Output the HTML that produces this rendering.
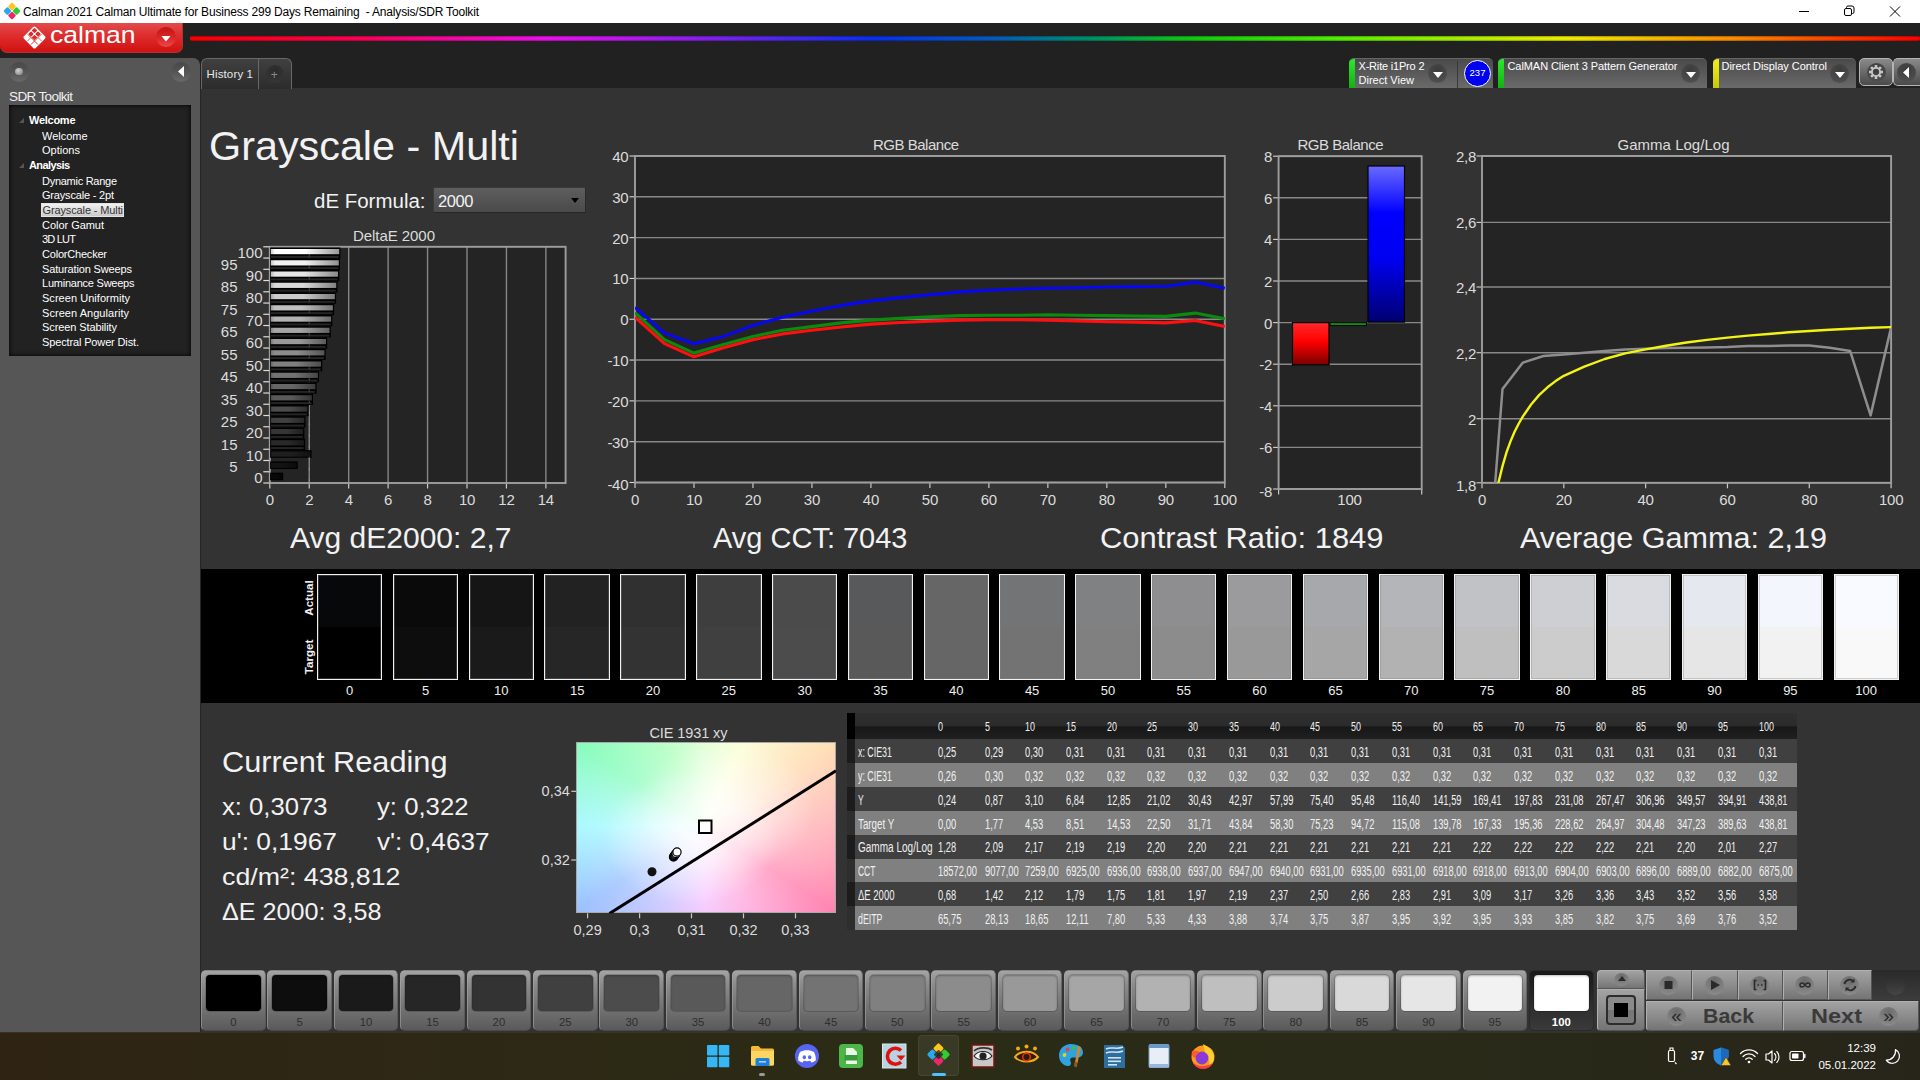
<!DOCTYPE html><html lang="en"><head><meta charset="utf-8"><title>Calman 2021 - Analysis/SDR Toolkit</title><style>
*{margin:0;padding:0;box-sizing:border-box}
html,body{width:1920px;height:1080px;overflow:hidden}
body{background:#333;font-family:"Liberation Sans",sans-serif;position:relative}
.a{position:absolute}
.t{position:absolute;white-space:nowrap;line-height:1}
svg{position:absolute;overflow:visible}
</style></head><body>
<div class="a " style="left:0px;top:0px;width:1920px;height:23px;background:#fff"></div>
<svg style="left:3px;top:2px" width="18" height="18" viewBox="0 0 18 18"><g transform="translate(9 9) rotate(45)"><rect x="-6.2" y="-6.2" width="6" height="6" rx="1.2" fill="#ffc61a"/><rect x="0.2" y="-6.2" width="6" height="6" rx="1.2" fill="#35c935"/><rect x="-6.2" y="0.2" width="6" height="6" rx="1.2" fill="#29a9e8"/><rect x="0.2" y="0.2" width="6" height="6" rx="1.2" fill="#e8286a"/></g></svg>
<div class="t" style="top:6.24px;font-size:12px;color:#000;letter-spacing:-0.187px;left:23.00px;white-space:pre;">Calman 2021 Calman Ultimate for Business 299 Days Remaining  - Analysis/SDR Toolkit</div>
<svg style="left:1790px;top:0" width="130" height="23" viewBox="0 0 130 23" fill="none" stroke="#000" stroke-width="1"><path d="M9 11.5h10"/><rect x="54.5" y="8.5" width="7" height="7" rx="1.5"/><path d="M56.5 8.5v-1a1.5 1.5 0 0 1 1.5-1.5h4a2 2 0 0 1 2 2v4a1.5 1.5 0 0 1-1.500 1.500h-1"/><path d="M100 6.5l10 10M110 6.500l-10 10"/></svg>
<div class="a " style="left:0px;top:23px;width:1920px;height:65px;background:#212121"></div>
<div class="a " style="left:190px;top:35.5px;width:1730px;height:5px;background:linear-gradient(90deg,#ff0000 0,#ff0058 10%,#f010f0 20.500%,#8420f0 30%,#0830f0 39.500%,#0460b4 47%,#00906c 52%,#10cc10 58%,#50f000 66%,#f0f000 79.500%,#ff9000 89%,#ff0000 100%);border-radius:2px"></div>
<div class="a " style="left:190px;top:35.5px;width:1730px;height:5px;background:linear-gradient(180deg,rgba(0,0,0,.35),rgba(0,0,0,0) 35%,rgba(0,0,0,0) 65%,rgba(0,0,0,.35));border-radius:2px"></div>
<div class="a " style="left:0px;top:23px;width:183px;height:30px;background:linear-gradient(180deg,#e24c4c 0,#de2c2c 45%,#d01212 100%);border-radius:0 0 7px 7px;border:1px solid #b83030;border-top:none;border-left:none"></div>
<svg style="left:22px;top:25px" width="25" height="25" viewBox="-12.5 -12.5 25 25"><g transform="rotate(45)"><rect x="-8.300" y="-8.300" width="16.600" height="16.600" rx="1.800" fill="#fff"/><g fill="#dc2a2a"><rect x="-6.900" y="-6.900" width="3.900" height="3.900" rx=".6"/><rect x="-1.950" y="-6.900" width="3.900" height="3.900" rx=".6"/><rect x="-6.900" y="-1.950" width="3.900" height="3.900" rx=".6"/><rect x="-1.950" y="-1.950" width="3.900" height="3.900" rx=".6"/></g><path d="M2.500 -7v14.500M-7 2.500h14.500" stroke="#dc2a2a" stroke-width=".9" fill="none"/><path d="M-2.500 2.500v5M2.500 -2.500h5" stroke="#dc2a2a" stroke-width=".7" fill="none"/></g></svg>
<div class="t" style="top:22.56px;font-size:24.5px;color:#fff;left:49.50px;transform:scaleX(1.08256);transform-origin:0 0;">calman</div>
<div class="a " style="left:155.8px;top:27px;width:19.8px;height:19.8px;border-radius:50%;background:linear-gradient(180deg,#c41414,#d82424 50%,#ec4a4a 100%)"></div>
<svg style="left:160.800px;top:35.800px" width="10" height="5.500" viewBox="0 0 10 6"><path d="M0 0h10l-5 6z" fill="#fff"/></svg>
<div class="a " style="left:0px;top:58px;width:199.5px;height:973.8px;background:#565656;border-radius:0 7px 0 0"></div>
<div class="a " style="left:199.5px;top:88px;width:1.5px;height:944px;background:#262626"></div>
<div class="a " style="left:9px;top:62px;width:20px;height:20px;border-radius:50%;background:linear-gradient(180deg,#484848,#555 50%,#6a6a6a)"></div>
<div class="a " style="left:15.3px;top:67.8px;width:7.4px;height:7.4px;border-radius:50%;background:radial-gradient(circle at 40% 35%,#d0d0d0,#858585 85%)"></div>
<div class="a " style="left:171px;top:62px;width:20px;height:20px;border-radius:50%;background:linear-gradient(180deg,#484848,#555 50%,#6a6a6a)"></div>
<svg style="left:178px;top:66px" width="6" height="11" viewBox="0 0 6 11"><path d="M6 0v11l-6-5.500z" fill="#fff"/></svg>
<div class="t" style="top:89.57px;font-size:13.5px;color:#f0f0f0;letter-spacing:-0.628px;left:9.00px;">SDR Toolkit</div>
<div class="a " style="left:9.3px;top:105px;width:181.3px;height:250.5px;background:#222;box-shadow:inset 0 0 5px #000"></div>
<svg style="left:18.500px;top:117.5px" width="5" height="5" viewBox="0 0 5 5"><path d="M5 0v5h-5z" fill="#555"/></svg>
<div class="t" style="top:114.69px;font-size:11px;color:#fff;font-weight:bold;letter-spacing:-0.265px;left:29.00px;">Welcome</div>
<div class="t" style="top:130.69px;font-size:11px;color:#fff;letter-spacing:-0.024px;left:42.00px;">Welcome</div>
<div class="t" style="top:144.69px;font-size:11px;color:#fff;letter-spacing:0.015px;left:42.00px;">Options</div>
<svg style="left:18.500px;top:162.5px" width="5" height="5" viewBox="0 0 5 5"><path d="M5 0v5h-5z" fill="#555"/></svg>
<div class="t" style="top:159.69px;font-size:11px;color:#fff;font-weight:bold;letter-spacing:-0.607px;left:29.00px;">Analysis</div>
<div class="t" style="top:175.69px;font-size:11px;color:#fff;letter-spacing:-0.271px;left:42.00px;">Dynamic Range</div>
<div class="t" style="top:189.69px;font-size:11px;color:#fff;letter-spacing:-0.185px;left:42.00px;">Grayscale - 2pt</div>
<div class="a " style="left:41px;top:203px;width:83px;height:14px;background:linear-gradient(180deg,#f2f2f2,#cacaca);border:1px solid #e4e4e4"></div>
<div class="t" style="top:204.69px;font-size:11px;color:#333;letter-spacing:-0.126px;left:42.50px;">Grayscale - Multi</div>
<div class="t" style="top:219.69px;font-size:11px;color:#fff;letter-spacing:-0.035px;left:42.00px;">Color Gamut</div>
<div class="t" style="top:234.19px;font-size:11px;color:#fff;letter-spacing:-0.780px;left:42.00px;">3D LUT</div>
<div class="t" style="top:248.69px;font-size:11px;color:#fff;letter-spacing:-0.204px;left:42.00px;">ColorChecker</div>
<div class="t" style="top:263.69px;font-size:11px;color:#fff;letter-spacing:-0.146px;left:42.00px;">Saturation Sweeps</div>
<div class="t" style="top:278.19px;font-size:11px;color:#fff;letter-spacing:-0.234px;left:42.00px;">Luminance Sweeps</div>
<div class="t" style="top:292.69px;font-size:11px;color:#fff;letter-spacing:0.037px;left:42.00px;">Screen Uniformity</div>
<div class="t" style="top:307.69px;font-size:11px;color:#fff;letter-spacing:0.049px;left:42.00px;">Screen Angularity</div>
<div class="t" style="top:322.19px;font-size:11px;color:#fff;letter-spacing:-0.095px;left:42.00px;">Screen Stability</div>
<div class="t" style="top:336.69px;font-size:11px;color:#fff;letter-spacing:-0.139px;left:42.00px;">Spectral Power Dist.</div>
<div class="a " style="left:201px;top:58px;width:91px;height:30.5px;background:linear-gradient(180deg,#404040,#2c2c2c);border:1px solid #686868;border-bottom:none;border-radius:6px 6px 0 0"></div>
<div class="a " style="left:258px;top:59px;width:1px;height:29.5px;background:#686868"></div>
<div class="t" style="top:68.77px;font-size:11.5px;color:#e8e8e8;letter-spacing:0.141px;left:206.50px;">History 1</div>
<div class="a " style="left:265.5px;top:64.5px;width:18px;height:18px;border-radius:50%;background:radial-gradient(circle at 50% 30%,#2a2a2a,#353535 75%,#3c3c3c)"></div>
<div class="t" style="top:68.84px;font-size:12px;color:#8a8a8a;left:274.30px;transform:translateX(-50%);transform-origin:50% 0;">+</div>
<div class="a " style="left:1349px;top:58px;width:143.5px;height:30px;background:linear-gradient(180deg,#4a4a4a 0,#6a6a6a 100%);border-radius:5px 5px 0 0;overflow:hidden;border-top:1px solid #666"><div class="a" style="left:0;top:-1px;width:6px;height:31px;background:linear-gradient(180deg,#30e830,#10b010)"></div></div>
<div class="t" style="top:60.99px;font-size:11px;color:#fff;letter-spacing:-0.190px;left:1358.50px;">X-Rite i1Pro 2</div>
<div class="t" style="top:74.99px;font-size:11px;color:#fff;letter-spacing:0.008px;left:1358.50px;">Direct View</div>
<div class="a " style="left:1428px;top:64px;width:19px;height:19px;border-radius:50%;background:radial-gradient(circle at 50% 30%,#3c3c3c,#4c4c4c 70%,#585858)"></div>
<svg style="left:1432.5px;top:72px" width="10" height="6" viewBox="0 0 10 6"><path d="M0 0h10l-5 6z" fill="#fff"/></svg>
<div class="a " style="left:1456.5px;top:61px;width:1px;height:27px;background:#3a3a3a"></div>
<div class="a " style="left:1464px;top:59.5px;width:27px;height:27px;border-radius:50%;background:#0000f0;border:1.500px solid #fff"></div>
<div class="t" style="top:68.16px;font-size:9.5px;color:#fff;left:1477.50px;transform:translateX(-50%);transform-origin:50% 0;">237</div>
<div class="a " style="left:1498px;top:58px;width:208.5px;height:30px;background:linear-gradient(180deg,#4a4a4a 0,#6a6a6a 100%);border-radius:5px 5px 0 0;overflow:hidden;border-top:1px solid #666"><div class="a" style="left:0;top:-1px;width:6px;height:31px;background:linear-gradient(180deg,#30e830,#10b010)"></div></div>
<div class="t" style="top:60.99px;font-size:11px;color:#fff;letter-spacing:-0.075px;left:1507.50px;">CalMAN Client 3 Pattern Generator</div>
<div class="a " style="left:1681px;top:64px;width:19px;height:19px;border-radius:50%;background:radial-gradient(circle at 50% 30%,#3c3c3c,#4c4c4c 70%,#585858)"></div>
<svg style="left:1685.5px;top:72px" width="10" height="6" viewBox="0 0 10 6"><path d="M0 0h10l-5 6z" fill="#fff"/></svg>
<div class="a " style="left:1712.5px;top:58px;width:143.5px;height:30px;background:linear-gradient(180deg,#4a4a4a 0,#6a6a6a 100%);border-radius:5px 5px 0 0;overflow:hidden;border-top:1px solid #666"><div class="a" style="left:0;top:-1px;width:6px;height:31px;background:linear-gradient(180deg,#f0f020,#c8c800)"></div></div>
<div class="t" style="top:60.99px;font-size:11px;color:#fff;letter-spacing:-0.041px;left:1721.50px;">Direct Display Control</div>
<div class="a " style="left:1830px;top:64px;width:19px;height:19px;border-radius:50%;background:radial-gradient(circle at 50% 30%,#3c3c3c,#4c4c4c 70%,#585858)"></div>
<svg style="left:1834.5px;top:72px" width="10" height="6" viewBox="0 0 10 6"><path d="M0 0h10l-5 6z" fill="#fff"/></svg>
<div class="a " style="left:1859px;top:58px;width:34px;height:28px;background:linear-gradient(180deg,#8a8a8a,#4a4a4a);border:1px solid #b4b4b4;border-radius:5px"></div>
<div class="a " style="left:1866.5px;top:62.5px;width:19px;height:19px;border-radius:50%;background:radial-gradient(circle at 50% 30%,#3c3c3c,#4c4c4c 70%,#585858)"></div>
<svg style="left:1868px;top:64px" width="16" height="16" viewBox="-8 -8 16 16"><g fill="#c6c6c6"><rect x="-1.300" y="-7" width="2.600" height="3.300" transform="rotate(0)"/><rect x="-1.300" y="-7" width="2.600" height="3.300" transform="rotate(45)"/><rect x="-1.300" y="-7" width="2.600" height="3.300" transform="rotate(90)"/><rect x="-1.300" y="-7" width="2.600" height="3.300" transform="rotate(135)"/><rect x="-1.300" y="-7" width="2.600" height="3.300" transform="rotate(180)"/><rect x="-1.300" y="-7" width="2.600" height="3.300" transform="rotate(225)"/><rect x="-1.300" y="-7" width="2.600" height="3.300" transform="rotate(270)"/><rect x="-1.300" y="-7" width="2.600" height="3.300" transform="rotate(315)"/></g><circle r="4.100" fill="none" stroke="#c6c6c6" stroke-width="1.900"/></svg>
<div class="a " style="left:1893px;top:58px;width:27px;height:28px;background:linear-gradient(180deg,#8a8a8a,#4a4a4a);border:1px solid #b4b4b4;border-right:none;border-radius:5px 0 0 5px"></div>
<div class="a " style="left:1897px;top:62.5px;width:19px;height:19px;border-radius:50%;background:radial-gradient(circle at 50% 30%,#3c3c3c,#4c4c4c 70%,#585858)"></div>
<svg style="left:1903px;top:66.500px" width="6" height="11" viewBox="0 0 6 11"><path d="M6 0v11l-6-5.500z" fill="#fff"/></svg>
<div class="t" style="top:125.72px;font-size:40.5px;color:#f2f2f2;left:208.50px;transform:scaleX(1.02037);transform-origin:0 0;">Grayscale - Multi</div>
<div class="t" style="top:190.65px;font-size:20.5px;color:#f2f2f2;left:313.50px;transform:scaleX(0.998659);transform-origin:0 0;">dE Formula:</div>
<div class="a " style="left:432.5px;top:186.8px;width:153.8px;height:26.4px;background:linear-gradient(180deg,#5e5e5e,#4a4a4a);border:1px solid #3a3a3a;border-bottom-color:#262626;border-right-color:#2a2a2a"></div>
<div class="t" style="top:193.03px;font-size:16.5px;color:#f2f2f2;letter-spacing:-0.402px;left:438.00px;">2000</div>
<svg style="left:571px;top:198px" width="8" height="5" viewBox="0 0 8 5"><path d="M0 0h8l-4 5z" fill="#000"/></svg>
<div class="t" style="top:227.70px;font-size:15px;color:#dcdcdc;letter-spacing:-0.056px;left:393.97px;transform:translateX(-50%);transform-origin:50% 0;">DeltaE 2000</div>
<div class="t" style="top:470.38px;font-size:15px;color:#dcdcdc;right:1657.50px;">0</div>
<div class="t" style="top:459.13px;font-size:15px;color:#dcdcdc;right:1682.50px;">5</div>
<div class="t" style="top:447.88px;font-size:15px;color:#dcdcdc;right:1657.50px;">10</div>
<div class="t" style="top:436.64px;font-size:15px;color:#dcdcdc;right:1682.50px;">15</div>
<div class="t" style="top:425.39px;font-size:15px;color:#dcdcdc;right:1657.50px;">20</div>
<div class="t" style="top:414.14px;font-size:15px;color:#dcdcdc;right:1682.50px;">25</div>
<div class="t" style="top:402.89px;font-size:15px;color:#dcdcdc;right:1657.50px;">30</div>
<div class="t" style="top:391.65px;font-size:15px;color:#dcdcdc;right:1682.50px;">35</div>
<div class="t" style="top:380.40px;font-size:15px;color:#dcdcdc;right:1657.50px;">40</div>
<div class="t" style="top:369.15px;font-size:15px;color:#dcdcdc;right:1682.50px;">45</div>
<div class="t" style="top:357.90px;font-size:15px;color:#dcdcdc;right:1657.50px;">50</div>
<div class="t" style="top:346.65px;font-size:15px;color:#dcdcdc;right:1682.50px;">55</div>
<div class="t" style="top:335.41px;font-size:15px;color:#dcdcdc;right:1657.50px;">60</div>
<div class="t" style="top:324.16px;font-size:15px;color:#dcdcdc;right:1682.50px;">65</div>
<div class="t" style="top:312.91px;font-size:15px;color:#dcdcdc;right:1657.50px;">70</div>
<div class="t" style="top:301.66px;font-size:15px;color:#dcdcdc;right:1682.50px;">75</div>
<div class="t" style="top:290.42px;font-size:15px;color:#dcdcdc;right:1657.50px;">80</div>
<div class="t" style="top:279.17px;font-size:15px;color:#dcdcdc;right:1682.50px;">85</div>
<div class="t" style="top:267.92px;font-size:15px;color:#dcdcdc;right:1657.50px;">90</div>
<div class="t" style="top:256.67px;font-size:15px;color:#dcdcdc;right:1682.50px;">95</div>
<div class="t" style="top:245.43px;font-size:15px;color:#dcdcdc;right:1657.50px;">100</div>
<div class="t" style="top:492.30px;font-size:15px;color:#dcdcdc;left:269.80px;transform:translateX(-50%);transform-origin:50% 0;letter-spacing:-0.250px;">0</div>
<div class="t" style="top:492.30px;font-size:15px;color:#dcdcdc;left:309.24px;transform:translateX(-50%);transform-origin:50% 0;letter-spacing:-0.250px;">2</div>
<div class="t" style="top:492.30px;font-size:15px;color:#dcdcdc;left:348.68px;transform:translateX(-50%);transform-origin:50% 0;letter-spacing:-0.250px;">4</div>
<div class="t" style="top:492.30px;font-size:15px;color:#dcdcdc;left:388.12px;transform:translateX(-50%);transform-origin:50% 0;letter-spacing:-0.250px;">6</div>
<div class="t" style="top:492.30px;font-size:15px;color:#dcdcdc;left:427.56px;transform:translateX(-50%);transform-origin:50% 0;letter-spacing:-0.250px;">8</div>
<div class="t" style="top:492.30px;font-size:15px;color:#dcdcdc;left:467.00px;transform:translateX(-50%);transform-origin:50% 0;letter-spacing:-0.250px;">10</div>
<div class="t" style="top:492.30px;font-size:15px;color:#dcdcdc;left:506.44px;transform:translateX(-50%);transform-origin:50% 0;letter-spacing:-0.250px;">12</div>
<div class="t" style="top:492.30px;font-size:15px;color:#dcdcdc;left:545.88px;transform:translateX(-50%);transform-origin:50% 0;letter-spacing:-0.250px;">14</div>
<div class="t" style="top:137.10px;font-size:15px;color:#dcdcdc;letter-spacing:-0.488px;left:915.76px;transform:translateX(-50%);transform-origin:50% 0;">RGB Balance</div>
<div class="t" style="top:477.40px;font-size:15px;color:#dcdcdc;right:1291.70px;letter-spacing:-0.250px;">-40</div>
<div class="t" style="top:434.69px;font-size:15px;color:#dcdcdc;right:1291.70px;letter-spacing:-0.250px;">-30</div>
<div class="t" style="top:393.88px;font-size:15px;color:#dcdcdc;right:1291.70px;letter-spacing:-0.250px;">-20</div>
<div class="t" style="top:353.06px;font-size:15px;color:#dcdcdc;right:1291.70px;letter-spacing:-0.250px;">-10</div>
<div class="t" style="top:312.25px;font-size:15px;color:#dcdcdc;right:1291.70px;letter-spacing:-0.250px;">0</div>
<div class="t" style="top:271.44px;font-size:15px;color:#dcdcdc;right:1291.70px;letter-spacing:-0.250px;">10</div>
<div class="t" style="top:230.63px;font-size:15px;color:#dcdcdc;right:1291.70px;letter-spacing:-0.250px;">20</div>
<div class="t" style="top:189.82px;font-size:15px;color:#dcdcdc;right:1291.70px;letter-spacing:-0.250px;">30</div>
<div class="t" style="top:149.00px;font-size:15px;color:#dcdcdc;right:1291.70px;letter-spacing:-0.250px;">40</div>
<div class="t" style="top:492.30px;font-size:15px;color:#dcdcdc;left:635.00px;transform:translateX(-50%);transform-origin:50% 0;letter-spacing:-0.250px;">0</div>
<div class="t" style="top:492.30px;font-size:15px;color:#dcdcdc;left:693.98px;transform:translateX(-50%);transform-origin:50% 0;letter-spacing:-0.250px;">10</div>
<div class="t" style="top:492.30px;font-size:15px;color:#dcdcdc;left:752.96px;transform:translateX(-50%);transform-origin:50% 0;letter-spacing:-0.250px;">20</div>
<div class="t" style="top:492.30px;font-size:15px;color:#dcdcdc;left:811.94px;transform:translateX(-50%);transform-origin:50% 0;letter-spacing:-0.250px;">30</div>
<div class="t" style="top:492.30px;font-size:15px;color:#dcdcdc;left:870.92px;transform:translateX(-50%);transform-origin:50% 0;letter-spacing:-0.250px;">40</div>
<div class="t" style="top:492.30px;font-size:15px;color:#dcdcdc;left:929.90px;transform:translateX(-50%);transform-origin:50% 0;letter-spacing:-0.250px;">50</div>
<div class="t" style="top:492.30px;font-size:15px;color:#dcdcdc;left:988.88px;transform:translateX(-50%);transform-origin:50% 0;letter-spacing:-0.250px;">60</div>
<div class="t" style="top:492.30px;font-size:15px;color:#dcdcdc;left:1047.86px;transform:translateX(-50%);transform-origin:50% 0;letter-spacing:-0.250px;">70</div>
<div class="t" style="top:492.30px;font-size:15px;color:#dcdcdc;left:1106.84px;transform:translateX(-50%);transform-origin:50% 0;letter-spacing:-0.250px;">80</div>
<div class="t" style="top:492.30px;font-size:15px;color:#dcdcdc;left:1165.82px;transform:translateX(-50%);transform-origin:50% 0;letter-spacing:-0.250px;">90</div>
<div class="t" style="top:492.30px;font-size:15px;color:#dcdcdc;left:1224.80px;transform:translateX(-50%);transform-origin:50% 0;letter-spacing:-0.250px;">100</div>
<div class="t" style="top:137.10px;font-size:15px;color:#dcdcdc;letter-spacing:-0.488px;left:1340.26px;transform:translateX(-50%);transform-origin:50% 0;">RGB Balance</div>
<div class="t" style="top:483.80px;font-size:15px;color:#dcdcdc;right:648.00px;letter-spacing:-0.250px;">-8</div>
<div class="t" style="top:440.40px;font-size:15px;color:#dcdcdc;right:648.00px;letter-spacing:-0.250px;">-6</div>
<div class="t" style="top:398.80px;font-size:15px;color:#dcdcdc;right:648.00px;letter-spacing:-0.250px;">-4</div>
<div class="t" style="top:357.20px;font-size:15px;color:#dcdcdc;right:648.00px;letter-spacing:-0.250px;">-2</div>
<div class="t" style="top:315.60px;font-size:15px;color:#dcdcdc;right:648.00px;letter-spacing:-0.250px;">0</div>
<div class="t" style="top:274.00px;font-size:15px;color:#dcdcdc;right:648.00px;letter-spacing:-0.250px;">2</div>
<div class="t" style="top:232.40px;font-size:15px;color:#dcdcdc;right:648.00px;letter-spacing:-0.250px;">4</div>
<div class="t" style="top:190.80px;font-size:15px;color:#dcdcdc;right:648.00px;letter-spacing:-0.250px;">6</div>
<div class="t" style="top:149.20px;font-size:15px;color:#dcdcdc;right:648.00px;letter-spacing:-0.250px;">8</div>
<div class="t" style="top:492.30px;font-size:15px;color:#dcdcdc;left:1349.50px;transform:translateX(-50%);transform-origin:50% 0;letter-spacing:-0.250px;">100</div>
<div class="t" style="top:137.10px;font-size:15px;color:#dcdcdc;letter-spacing:0.022px;left:1673.51px;transform:translateX(-50%);transform-origin:50% 0;">Gamma Log/Log</div>
<div class="t" style="top:149.00px;font-size:15px;color:#dcdcdc;right:444.00px;letter-spacing:-0.250px;">2,8</div>
<div class="t" style="top:215.40px;font-size:15px;color:#dcdcdc;right:444.00px;letter-spacing:-0.250px;">2,6</div>
<div class="t" style="top:280.00px;font-size:15px;color:#dcdcdc;right:444.00px;letter-spacing:-0.250px;">2,4</div>
<div class="t" style="top:345.70px;font-size:15px;color:#dcdcdc;right:444.00px;letter-spacing:-0.250px;">2,2</div>
<div class="t" style="top:411.70px;font-size:15px;color:#dcdcdc;right:444.00px;letter-spacing:-0.250px;">2</div>
<div class="t" style="top:477.60px;font-size:15px;color:#dcdcdc;right:444.00px;letter-spacing:-0.250px;">1,8</div>
<div class="t" style="top:492.30px;font-size:15px;color:#dcdcdc;left:1482.00px;transform:translateX(-50%);transform-origin:50% 0;letter-spacing:-0.250px;">0</div>
<div class="t" style="top:492.30px;font-size:15px;color:#dcdcdc;left:1563.82px;transform:translateX(-50%);transform-origin:50% 0;letter-spacing:-0.250px;">20</div>
<div class="t" style="top:492.30px;font-size:15px;color:#dcdcdc;left:1645.64px;transform:translateX(-50%);transform-origin:50% 0;letter-spacing:-0.250px;">40</div>
<div class="t" style="top:492.30px;font-size:15px;color:#dcdcdc;left:1727.46px;transform:translateX(-50%);transform-origin:50% 0;letter-spacing:-0.250px;">60</div>
<div class="t" style="top:492.30px;font-size:15px;color:#dcdcdc;left:1809.28px;transform:translateX(-50%);transform-origin:50% 0;letter-spacing:-0.250px;">80</div>
<div class="t" style="top:492.30px;font-size:15px;color:#dcdcdc;left:1891.10px;transform:translateX(-50%);transform-origin:50% 0;letter-spacing:-0.250px;">100</div>
<svg style="left:0;top:0" width="1920" height="1080" viewBox="0 0 1920 1080"><rect x="269.8" y="246.8" width="295.8" height="236.2" fill="#242424"/><path d="M309.24 246.8V483" stroke="#868686" stroke-width="1.400"/><path d="M309.24 483v5.5" stroke="#c8c8c8" stroke-width="1.200"/><path d="M348.68 246.8V483" stroke="#868686" stroke-width="1.400"/><path d="M348.68 483v5.5" stroke="#c8c8c8" stroke-width="1.200"/><path d="M388.12 246.8V483" stroke="#868686" stroke-width="1.400"/><path d="M388.12 483v5.5" stroke="#c8c8c8" stroke-width="1.200"/><path d="M427.56 246.8V483" stroke="#868686" stroke-width="1.400"/><path d="M427.56 483v5.5" stroke="#c8c8c8" stroke-width="1.200"/><path d="M467.00 246.8V483" stroke="#868686" stroke-width="1.400"/><path d="M467.00 483v5.5" stroke="#c8c8c8" stroke-width="1.200"/><path d="M506.44 246.8V483" stroke="#868686" stroke-width="1.400"/><path d="M506.44 483v5.5" stroke="#c8c8c8" stroke-width="1.200"/><path d="M545.88 246.8V483" stroke="#868686" stroke-width="1.400"/><path d="M545.88 483v5.5" stroke="#c8c8c8" stroke-width="1.200"/><path d="M269.80 246.8V483" stroke="#868686" stroke-width="1.400"/><path d="M269.80 483v5.5" stroke="#c8c8c8" stroke-width="1.200"/><rect x="269.8" y="246.8" width="295.8" height="236.2" fill="none" stroke="#9e9e9e" stroke-width="1.900"/><defs><linearGradient id="bg0" x1="0" x2="1" y1="0" y2="0"><stop offset="0" stop-color="rgb(6,6,6)"/><stop offset=".06" stop-color="rgb(8,8,8)"/><stop offset=".5" stop-color="rgb(8,8,8)"/><stop offset="1" stop-color="rgb(4,4,4)"/></linearGradient><linearGradient id="bg1" x1="0" x2="1" y1="0" y2="0"><stop offset="0" stop-color="rgb(15,15,15)"/><stop offset=".06" stop-color="rgb(19,19,19)"/><stop offset=".5" stop-color="rgb(19,19,19)"/><stop offset="1" stop-color="rgb(11,11,11)"/></linearGradient><linearGradient id="bg2" x1="0" x2="1" y1="0" y2="0"><stop offset="0" stop-color="rgb(24,24,24)"/><stop offset=".06" stop-color="rgb(31,31,31)"/><stop offset=".5" stop-color="rgb(31,31,31)"/><stop offset="1" stop-color="rgb(18,18,18)"/></linearGradient><linearGradient id="bg3" x1="0" x2="1" y1="0" y2="0"><stop offset="0" stop-color="rgb(33,33,33)"/><stop offset=".06" stop-color="rgb(42,42,42)"/><stop offset=".5" stop-color="rgb(42,42,42)"/><stop offset="1" stop-color="rgb(25,25,25)"/></linearGradient><linearGradient id="bg4" x1="0" x2="1" y1="0" y2="0"><stop offset="0" stop-color="rgb(42,42,42)"/><stop offset=".06" stop-color="rgb(53,53,53)"/><stop offset=".5" stop-color="rgb(53,53,53)"/><stop offset="1" stop-color="rgb(31,31,31)"/></linearGradient><linearGradient id="bg5" x1="0" x2="1" y1="0" y2="0"><stop offset="0" stop-color="rgb(52,52,52)"/><stop offset=".06" stop-color="rgb(65,65,65)"/><stop offset=".5" stop-color="rgb(65,65,65)"/><stop offset="1" stop-color="rgb(39,39,39)"/></linearGradient><linearGradient id="bg6" x1="0" x2="1" y1="0" y2="0"><stop offset="0" stop-color="rgb(60,60,60)"/><stop offset=".06" stop-color="rgb(76,76,76)"/><stop offset=".5" stop-color="rgb(76,76,76)"/><stop offset="1" stop-color="rgb(45,45,45)"/></linearGradient><linearGradient id="bg7" x1="0" x2="1" y1="0" y2="0"><stop offset="0" stop-color="rgb(71,71,71)"/><stop offset=".06" stop-color="rgb(89,89,89)"/><stop offset=".5" stop-color="rgb(89,89,89)"/><stop offset="1" stop-color="rgb(53,53,53)"/></linearGradient><linearGradient id="bg8" x1="0" x2="1" y1="0" y2="0"><stop offset="0" stop-color="rgb(81,81,81)"/><stop offset=".06" stop-color="rgb(102,102,102)"/><stop offset=".5" stop-color="rgb(102,102,102)"/><stop offset="1" stop-color="rgb(61,61,61)"/></linearGradient><linearGradient id="bg9" x1="0" x2="1" y1="0" y2="0"><stop offset="0" stop-color="rgb(92,92,92)"/><stop offset=".06" stop-color="rgb(115,115,115)"/><stop offset=".5" stop-color="rgb(115,115,115)"/><stop offset="1" stop-color="rgb(69,69,69)"/></linearGradient><linearGradient id="bg10" x1="0" x2="1" y1="0" y2="0"><stop offset="0" stop-color="rgb(102,102,102)"/><stop offset=".06" stop-color="rgb(128,128,128)"/><stop offset=".5" stop-color="rgb(128,128,128)"/><stop offset="1" stop-color="rgb(76,76,76)"/></linearGradient><linearGradient id="bg11" x1="0" x2="1" y1="0" y2="0"><stop offset="0" stop-color="rgb(112,112,112)"/><stop offset=".06" stop-color="rgb(140,140,140)"/><stop offset=".5" stop-color="rgb(140,140,140)"/><stop offset="1" stop-color="rgb(84,84,84)"/></linearGradient><linearGradient id="bg12" x1="0" x2="1" y1="0" y2="0"><stop offset="0" stop-color="rgb(122,122,122)"/><stop offset=".06" stop-color="rgb(153,153,153)"/><stop offset=".5" stop-color="rgb(153,153,153)"/><stop offset="1" stop-color="rgb(91,91,91)"/></linearGradient><linearGradient id="bg13" x1="0" x2="1" y1="0" y2="0"><stop offset="0" stop-color="rgb(132,132,132)"/><stop offset=".06" stop-color="rgb(166,166,166)"/><stop offset=".5" stop-color="rgb(166,166,166)"/><stop offset="1" stop-color="rgb(99,99,99)"/></linearGradient><linearGradient id="bg14" x1="0" x2="1" y1="0" y2="0"><stop offset="0" stop-color="rgb(142,142,142)"/><stop offset=".06" stop-color="rgb(178,178,178)"/><stop offset=".5" stop-color="rgb(178,178,178)"/><stop offset="1" stop-color="rgb(106,106,106)"/></linearGradient><linearGradient id="bg15" x1="0" x2="1" y1="0" y2="0"><stop offset="0" stop-color="rgb(152,152,152)"/><stop offset=".06" stop-color="rgb(191,191,191)"/><stop offset=".5" stop-color="rgb(191,191,191)"/><stop offset="1" stop-color="rgb(114,114,114)"/></linearGradient><linearGradient id="bg16" x1="0" x2="1" y1="0" y2="0"><stop offset="0" stop-color="rgb(163,163,163)"/><stop offset=".06" stop-color="rgb(204,204,204)"/><stop offset=".5" stop-color="rgb(204,204,204)"/><stop offset="1" stop-color="rgb(122,122,122)"/></linearGradient><linearGradient id="bg17" x1="0" x2="1" y1="0" y2="0"><stop offset="0" stop-color="rgb(173,173,173)"/><stop offset=".06" stop-color="rgb(217,217,217)"/><stop offset=".5" stop-color="rgb(217,217,217)"/><stop offset="1" stop-color="rgb(130,130,130)"/></linearGradient><linearGradient id="bg18" x1="0" x2="1" y1="0" y2="0"><stop offset="0" stop-color="rgb(184,184,184)"/><stop offset=".06" stop-color="rgb(230,230,230)"/><stop offset=".5" stop-color="rgb(230,230,230)"/><stop offset="1" stop-color="rgb(138,138,138)"/></linearGradient><linearGradient id="bg19" x1="0" x2="1" y1="0" y2="0"><stop offset="0" stop-color="rgb(193,193,193)"/><stop offset=".06" stop-color="rgb(242,242,242)"/><stop offset=".5" stop-color="rgb(242,242,242)"/><stop offset="1" stop-color="rgb(145,145,145)"/></linearGradient><linearGradient id="bg20" x1="0" x2="1" y1="0" y2="0"><stop offset="0" stop-color="rgb(204,204,204)"/><stop offset=".06" stop-color="rgb(255,255,255)"/><stop offset=".5" stop-color="rgb(255,255,255)"/><stop offset="1" stop-color="rgb(153,153,153)"/></linearGradient></defs><path d="M263.3 471.75h6" stroke="#ddd" stroke-width="1.200"/><rect x="270.10" y="472.65" width="13.11" height="7.600" fill="#000"/><rect x="270.80" y="473.95" width="11.21" height="5.200" fill="url(#bg0)"/><path d="M263.3 460.50h6" stroke="#ddd" stroke-width="1.200"/><rect x="270.10" y="461.40" width="27.70" height="7.600" fill="#000"/><rect x="270.80" y="462.70" width="25.80" height="5.200" fill="url(#bg1)"/><path d="M263.3 449.26h6" stroke="#ddd" stroke-width="1.200"/><rect x="270.10" y="450.16" width="41.51" height="7.600" fill="#000"/><rect x="270.80" y="451.46" width="39.61" height="5.200" fill="url(#bg2)"/><path d="M263.3 438.01h6" stroke="#ddd" stroke-width="1.200"/><rect x="270.10" y="438.71" width="35.00" height="11.25" fill="#000"/><rect x="270.80" y="447.11" width="32.70" height="2" fill="#252525"/><rect x="270.80" y="440.21" width="33.10" height="5.200" fill="url(#bg3)"/><path d="M263.3 426.76h6" stroke="#ddd" stroke-width="1.200"/><rect x="270.10" y="427.46" width="34.21" height="11.25" fill="#000"/><rect x="270.80" y="435.86" width="31.91" height="2" fill="#252525"/><rect x="270.80" y="428.96" width="32.31" height="5.200" fill="url(#bg4)"/><path d="M263.3 415.51h6" stroke="#ddd" stroke-width="1.200"/><rect x="270.10" y="416.21" width="35.39" height="11.25" fill="#000"/><rect x="270.80" y="424.61" width="33.09" height="2" fill="#252525"/><rect x="270.80" y="417.71" width="33.49" height="5.200" fill="url(#bg5)"/><path d="M263.3 404.27h6" stroke="#ddd" stroke-width="1.200"/><rect x="270.10" y="404.97" width="38.55" height="11.25" fill="#000"/><rect x="270.80" y="413.37" width="36.25" height="2" fill="#252525"/><rect x="270.80" y="406.47" width="36.65" height="5.200" fill="url(#bg6)"/><path d="M263.3 393.02h6" stroke="#ddd" stroke-width="1.200"/><rect x="270.10" y="393.72" width="42.89" height="11.25" fill="#000"/><rect x="270.80" y="402.12" width="40.59" height="2" fill="#252525"/><rect x="270.80" y="395.22" width="40.99" height="5.200" fill="url(#bg7)"/><path d="M263.3 381.77h6" stroke="#ddd" stroke-width="1.200"/><rect x="270.10" y="382.47" width="46.44" height="11.25" fill="#000"/><rect x="270.80" y="390.87" width="44.14" height="2" fill="#252525"/><rect x="270.80" y="383.97" width="44.54" height="5.200" fill="url(#bg8)"/><path d="M263.3 370.52h6" stroke="#ddd" stroke-width="1.200"/><rect x="270.10" y="371.22" width="49.00" height="11.25" fill="#000"/><rect x="270.80" y="379.62" width="46.70" height="2" fill="#252525"/><rect x="270.80" y="372.72" width="47.10" height="5.200" fill="url(#bg9)"/><path d="M263.3 359.28h6" stroke="#ddd" stroke-width="1.200"/><rect x="270.10" y="359.98" width="52.16" height="11.25" fill="#000"/><rect x="270.80" y="368.38" width="49.86" height="2" fill="#252525"/><rect x="270.80" y="361.48" width="50.26" height="5.200" fill="url(#bg10)"/><path d="M263.3 348.03h6" stroke="#ddd" stroke-width="1.200"/><rect x="270.10" y="348.73" width="55.51" height="11.25" fill="#000"/><rect x="270.80" y="357.13" width="53.21" height="2" fill="#252525"/><rect x="270.80" y="350.23" width="53.61" height="5.200" fill="url(#bg11)"/><path d="M263.3 336.78h6" stroke="#ddd" stroke-width="1.200"/><rect x="270.10" y="337.48" width="57.09" height="11.25" fill="#000"/><rect x="270.80" y="345.88" width="54.79" height="2" fill="#252525"/><rect x="270.80" y="338.98" width="55.19" height="5.200" fill="url(#bg12)"/><path d="M263.3 325.53h6" stroke="#ddd" stroke-width="1.200"/><rect x="270.10" y="326.23" width="60.63" height="11.25" fill="#000"/><rect x="270.80" y="334.63" width="58.33" height="2" fill="#252525"/><rect x="270.80" y="327.73" width="58.73" height="5.200" fill="url(#bg13)"/><path d="M263.3 314.29h6" stroke="#ddd" stroke-width="1.200"/><rect x="270.10" y="314.99" width="62.21" height="11.25" fill="#000"/><rect x="270.80" y="323.39" width="59.91" height="2" fill="#252525"/><rect x="270.80" y="316.49" width="60.31" height="5.200" fill="url(#bg14)"/><path d="M263.3 303.04h6" stroke="#ddd" stroke-width="1.200"/><rect x="270.10" y="303.74" width="63.99" height="11.25" fill="#000"/><rect x="270.80" y="312.14" width="61.69" height="2" fill="#252525"/><rect x="270.80" y="305.24" width="62.09" height="5.200" fill="url(#bg15)"/><path d="M263.3 291.79h6" stroke="#ddd" stroke-width="1.200"/><rect x="270.10" y="292.49" width="65.96" height="11.25" fill="#000"/><rect x="270.80" y="300.89" width="63.66" height="2" fill="#252525"/><rect x="270.80" y="293.99" width="64.06" height="5.200" fill="url(#bg16)"/><path d="M263.3 280.54h6" stroke="#ddd" stroke-width="1.200"/><rect x="270.10" y="281.24" width="67.34" height="11.25" fill="#000"/><rect x="270.80" y="289.64" width="65.04" height="2" fill="#252525"/><rect x="270.80" y="282.74" width="65.44" height="5.200" fill="url(#bg17)"/><path d="M263.3 269.30h6" stroke="#ddd" stroke-width="1.200"/><rect x="270.10" y="270.00" width="69.11" height="11.25" fill="#000"/><rect x="270.80" y="278.40" width="66.81" height="2" fill="#252525"/><rect x="270.80" y="271.50" width="67.21" height="5.200" fill="url(#bg18)"/><path d="M263.3 258.05h6" stroke="#ddd" stroke-width="1.200"/><rect x="270.10" y="258.75" width="69.90" height="11.25" fill="#000"/><rect x="270.80" y="267.15" width="67.60" height="2" fill="#252525"/><rect x="270.80" y="260.25" width="68.00" height="5.200" fill="url(#bg19)"/><path d="M263.3 246.80h6" stroke="#ddd" stroke-width="1.200"/><rect x="270.10" y="247.50" width="70.30" height="11.25" fill="#000"/><rect x="270.80" y="255.90" width="68.00" height="2" fill="#252525"/><rect x="270.80" y="249.00" width="68.40" height="5.200" fill="url(#bg20)"/><path d="M263.3 483.00h6" stroke="#ddd" stroke-width="1.200"/><path d="M309.24 246.8V483" stroke="#bbb" stroke-width="1" opacity=".35" stroke-dasharray="2.500 8.740" stroke-dashoffset="-7.500"/><rect x="635" y="156" width="589.8" height="326.5" fill="#242424"/><path d="M635 482.50H1224.8" stroke="#888" stroke-width="1.400"/><path d="M629.5 482.50H635" stroke="#d4d4d4" stroke-width="1.100"/><path d="M635 441.69H1224.8" stroke="#888" stroke-width="1.400"/><path d="M629.5 441.69H635" stroke="#d4d4d4" stroke-width="1.100"/><path d="M635 400.88H1224.8" stroke="#888" stroke-width="1.400"/><path d="M629.5 400.88H635" stroke="#d4d4d4" stroke-width="1.100"/><path d="M635 360.06H1224.8" stroke="#888" stroke-width="1.400"/><path d="M629.5 360.06H635" stroke="#d4d4d4" stroke-width="1.100"/><path d="M635 319.25H1224.8" stroke="#888" stroke-width="1.400"/><path d="M629.5 319.25H635" stroke="#d4d4d4" stroke-width="1.100"/><path d="M635 278.44H1224.8" stroke="#888" stroke-width="1.400"/><path d="M629.5 278.44H635" stroke="#d4d4d4" stroke-width="1.100"/><path d="M635 237.62H1224.8" stroke="#888" stroke-width="1.400"/><path d="M629.5 237.62H635" stroke="#d4d4d4" stroke-width="1.100"/><path d="M635 196.81H1224.8" stroke="#888" stroke-width="1.400"/><path d="M629.5 196.81H635" stroke="#d4d4d4" stroke-width="1.100"/><path d="M635 156.00H1224.8" stroke="#888" stroke-width="1.400"/><path d="M629.5 156.00H635" stroke="#d4d4d4" stroke-width="1.100"/><path d="M635.00 482.5v5.500" stroke="#c8c8c8" stroke-width="1.200"/><path d="M693.98 482.5v5.500" stroke="#c8c8c8" stroke-width="1.200"/><path d="M752.96 482.5v5.500" stroke="#c8c8c8" stroke-width="1.200"/><path d="M811.94 482.5v5.500" stroke="#c8c8c8" stroke-width="1.200"/><path d="M870.92 482.5v5.500" stroke="#c8c8c8" stroke-width="1.200"/><path d="M929.90 482.5v5.500" stroke="#c8c8c8" stroke-width="1.200"/><path d="M988.88 482.5v5.500" stroke="#c8c8c8" stroke-width="1.200"/><path d="M1047.86 482.5v5.500" stroke="#c8c8c8" stroke-width="1.200"/><path d="M1106.84 482.5v5.500" stroke="#c8c8c8" stroke-width="1.200"/><path d="M1165.82 482.5v5.500" stroke="#c8c8c8" stroke-width="1.200"/><path d="M1224.80 482.5v5.500" stroke="#c8c8c8" stroke-width="1.200"/><rect x="635" y="156" width="589.8" height="326.5" fill="none" stroke="#9e9e9e" stroke-width="1.900"/><polyline points="635.0,312.7 664.5,339.7 694.0,353.1 723.5,344.6 753.0,336.4 782.5,330.3 811.9,326.6 841.4,322.9 870.9,320.1 900.4,318.4 929.9,316.8 959.4,315.6 988.9,315.2 1018.4,315.2 1047.9,314.8 1077.3,315.2 1106.8,315.6 1136.3,316.0 1165.8,316.4 1195.3,313.1 1224.8,318.8" fill="none" stroke="#0c8a0c" stroke-width="3.100" stroke-linejoin="round" clip-path="url(#rclip)"/><polyline points="635.0,317.2 664.5,343.7 694.0,356.8 723.5,347.8 753.0,339.7 782.5,333.9 811.9,330.3 841.4,327.0 870.9,324.1 900.4,322.5 929.9,321.3 959.4,320.1 988.9,319.7 1018.4,319.7 1047.9,320.1 1077.3,320.9 1106.8,321.7 1136.3,322.1 1165.8,322.9 1195.3,320.5 1224.8,326.6" fill="none" stroke="#ff1010" stroke-width="3.100" stroke-linejoin="round" clip-path="url(#rclip)"/><polyline points="635.0,307.4 664.5,333.1 694.0,343.7 723.5,336.4 753.0,325.4 782.5,317.2 811.9,311.1 841.4,305.4 870.9,300.9 900.4,297.6 929.9,294.8 959.4,291.9 988.9,290.3 1018.4,289.0 1047.9,288.2 1077.3,287.8 1106.8,287.0 1136.3,286.6 1165.8,286.2 1195.3,282.1 1224.8,288.2" fill="none" stroke="#0808f0" stroke-width="3.100" stroke-linejoin="round" clip-path="url(#rclip)"/><defs><clipPath id="rclip"><rect x="635" y="156" width="590.8" height="326.5"/></clipPath></defs><rect x="1278.6" y="156.2" width="143.10000000000014" height="332.8" fill="#242424"/><path d="M1278.6 489.00H1421.7" stroke="#888" stroke-width="1.400"/><path d="M1273.1 489.00H1278.6" stroke="#d4d4d4" stroke-width="1.100"/><path d="M1278.6 447.40H1421.7" stroke="#888" stroke-width="1.400"/><path d="M1273.1 447.40H1278.6" stroke="#d4d4d4" stroke-width="1.100"/><path d="M1278.6 405.80H1421.7" stroke="#888" stroke-width="1.400"/><path d="M1273.1 405.80H1278.6" stroke="#d4d4d4" stroke-width="1.100"/><path d="M1278.6 364.20H1421.7" stroke="#888" stroke-width="1.400"/><path d="M1273.1 364.20H1278.6" stroke="#d4d4d4" stroke-width="1.100"/><path d="M1278.6 322.60H1421.7" stroke="#888" stroke-width="1.400"/><path d="M1273.1 322.60H1278.6" stroke="#d4d4d4" stroke-width="1.100"/><path d="M1278.6 281.00H1421.7" stroke="#888" stroke-width="1.400"/><path d="M1273.1 281.00H1278.6" stroke="#d4d4d4" stroke-width="1.100"/><path d="M1278.6 239.40H1421.7" stroke="#888" stroke-width="1.400"/><path d="M1273.1 239.40H1278.6" stroke="#d4d4d4" stroke-width="1.100"/><path d="M1278.6 197.80H1421.7" stroke="#888" stroke-width="1.400"/><path d="M1273.1 197.80H1278.6" stroke="#d4d4d4" stroke-width="1.100"/><path d="M1278.6 156.20H1421.7" stroke="#888" stroke-width="1.400"/><path d="M1273.1 156.20H1278.6" stroke="#d4d4d4" stroke-width="1.100"/><path d="M1278.60 489v5.500" stroke="#c8c8c8" stroke-width="1.200"/><path d="M1421.70 489v5.500" stroke="#c8c8c8" stroke-width="1.200"/><rect x="1278.6" y="156.2" width="143.10000000000014" height="332.8" fill="none" stroke="#9e9e9e" stroke-width="1.900"/><defs><linearGradient id="gr" x1="0" x2="0" y1="0" y2="1"><stop offset="0" stop-color="#ff2a2a"/><stop offset=".45" stop-color="#ff0000"/><stop offset="1" stop-color="#7a0000"/></linearGradient><linearGradient id="gb" x1="0" x2="0" y1="0" y2="1"><stop offset="0" stop-color="#6a6aff"/><stop offset=".3" stop-color="#0000ff"/><stop offset=".6" stop-color="#0000f0"/><stop offset="1" stop-color="#000070"/></linearGradient></defs><rect x="1292.500" y="322.6" width="36.500" height="42.2" fill="url(#gr)" stroke="#000" stroke-width="1.200"/><rect x="1330" y="322.6" width="36.500" height="3" fill="#118a11" stroke="#000" stroke-width="1"/><rect x="1368" y="166.0" width="36.500" height="156.1" fill="url(#gb)" stroke="#000" stroke-width="1.200"/><rect x="1482" y="156" width="409.0999999999999" height="326.8" fill="#242424"/><path d="M1482 156.00H1891.1" stroke="#888" stroke-width="1.400"/><path d="M1476.5 156.00H1482" stroke="#d4d4d4" stroke-width="1.100"/><path d="M1482 222.40H1891.1" stroke="#888" stroke-width="1.400"/><path d="M1476.5 222.40H1482" stroke="#d4d4d4" stroke-width="1.100"/><path d="M1482 287.00H1891.1" stroke="#888" stroke-width="1.400"/><path d="M1476.5 287.00H1482" stroke="#d4d4d4" stroke-width="1.100"/><path d="M1482 352.70H1891.1" stroke="#888" stroke-width="1.400"/><path d="M1476.5 352.70H1482" stroke="#d4d4d4" stroke-width="1.100"/><path d="M1482 418.70H1891.1" stroke="#888" stroke-width="1.400"/><path d="M1476.5 418.70H1482" stroke="#d4d4d4" stroke-width="1.100"/><path d="M1482 482.80H1891.1" stroke="#888" stroke-width="1.400"/><path d="M1476.5 482.80H1482" stroke="#d4d4d4" stroke-width="1.100"/><path d="M1482.00 482.8v5.500" stroke="#c8c8c8" stroke-width="1.200"/><path d="M1563.82 482.8v5.500" stroke="#c8c8c8" stroke-width="1.200"/><path d="M1645.64 482.8v5.500" stroke="#c8c8c8" stroke-width="1.200"/><path d="M1727.46 482.8v5.500" stroke="#c8c8c8" stroke-width="1.200"/><path d="M1809.28 482.8v5.500" stroke="#c8c8c8" stroke-width="1.200"/><path d="M1891.10 482.8v5.500" stroke="#c8c8c8" stroke-width="1.200"/><rect x="1482" y="156" width="409.0999999999999" height="326.8" fill="none" stroke="#9e9e9e" stroke-width="1.900"/><defs><clipPath id="gclip"><rect x="1482" y="156" width="410.0999999999999" height="326.8"/></clipPath></defs><polyline points="1482.0,652.7 1502.5,389.0 1522.9,362.6 1543.4,356.0 1563.8,354.4 1584.3,352.7 1604.7,351.1 1625.2,349.4 1645.6,348.8 1666.1,348.1 1686.5,347.8 1707.0,347.4 1727.5,347.1 1747.9,346.1 1768.4,346.1 1788.8,345.5 1809.3,345.5 1829.7,347.8 1850.2,351.1 1870.6,415.4 1891.1,327.4" fill="none" stroke="#8e8e8e" stroke-width="2.500" stroke-linejoin="round" clip-path="url(#gclip)"/><polyline points="1497.5,486.1 1498.4,482.8 1502.5,466.1 1506.5,452.4 1510.6,441.1 1514.7,431.5 1518.8,423.5 1522.9,416.4 1531.1,404.5 1539.3,394.9 1547.5,387.3 1555.6,381.1 1563.8,375.8 1584.3,366.6 1604.7,359.0 1625.2,353.4 1645.6,349.4 1666.1,345.8 1686.5,342.5 1707.0,339.9 1727.5,337.6 1747.9,335.6 1768.4,334.0 1788.8,332.3 1809.3,331.0 1829.7,329.7 1850.2,328.7 1870.6,327.7 1891.1,327.1" fill="none" stroke="#f4f414" stroke-width="2.400" stroke-linejoin="round" clip-path="url(#gclip)"/></svg>
<div class="t" style="top:523.75px;font-size:29px;color:#f2f2f2;left:289.50px;transform:scaleX(1.03544);transform-origin:0 0;">Avg dE2000: 2,7</div>
<div class="t" style="top:523.75px;font-size:29px;color:#f2f2f2;left:713.00px;transform:scaleX(0.999903);transform-origin:0 0;">Avg CCT: 7043</div>
<div class="t" style="top:523.75px;font-size:29px;color:#f2f2f2;left:1099.50px;transform:scaleX(1.06585);transform-origin:0 0;">Contrast Ratio: 1849</div>
<div class="t" style="top:523.75px;font-size:29px;color:#f2f2f2;left:1520.00px;transform:scaleX(1.05414);transform-origin:0 0;">Average Gamma: 2,19</div>
<div class="a " style="left:201px;top:568.5px;width:1719px;height:134.5px;background:#000"></div>
<div class="a " style="left:317px;top:574px;width:65.4px;height:106px;border:1px solid #f2f2f2;background:linear-gradient(180deg,rgb(7, 8, 10) 0,rgb(7, 8, 10) 49.500%,rgb(0, 0, 0) 50.500%,rgb(0, 0, 0) 100%);box-shadow:inset 0 0 0 1px rgba(128,128,128,.35)"></div>
<div class="t" style="top:684.20px;font-size:13px;color:#f0f0f0;left:349.70px;transform:translateX(-50%);transform-origin:50% 0;">0</div>
<div class="a " style="left:392.825px;top:574px;width:65.4px;height:106px;border:1px solid #f2f2f2;background:linear-gradient(180deg,rgb(10, 10, 10) 0,rgb(10, 10, 10) 49.500%,rgb(13, 13, 13) 50.500%,rgb(13, 13, 13) 100%);box-shadow:inset 0 0 0 1px rgba(128,128,128,.35)"></div>
<div class="t" style="top:684.20px;font-size:13px;color:#f0f0f0;left:425.52px;transform:translateX(-50%);transform-origin:50% 0;">5</div>
<div class="a " style="left:468.65px;top:574px;width:65.4px;height:106px;border:1px solid #f2f2f2;background:linear-gradient(180deg,rgb(21, 21, 22) 0,rgb(21, 21, 22) 49.500%,rgb(26, 26, 26) 50.500%,rgb(26, 26, 26) 100%);box-shadow:inset 0 0 0 1px rgba(128,128,128,.35)"></div>
<div class="t" style="top:684.20px;font-size:13px;color:#f0f0f0;left:501.35px;transform:translateX(-50%);transform-origin:50% 0;">10</div>
<div class="a " style="left:544.475px;top:574px;width:65.4px;height:106px;border:1px solid #f2f2f2;background:linear-gradient(180deg,rgb(34, 34, 35) 0,rgb(34, 34, 35) 49.500%,rgb(38, 38, 38) 50.500%,rgb(38, 38, 38) 100%);box-shadow:inset 0 0 0 1px rgba(128,128,128,.35)"></div>
<div class="t" style="top:684.20px;font-size:13px;color:#f0f0f0;left:577.17px;transform:translateX(-50%);transform-origin:50% 0;">15</div>
<div class="a " style="left:620.3px;top:574px;width:65.4px;height:106px;border:1px solid #f2f2f2;background:linear-gradient(180deg,rgb(48, 48, 49) 0,rgb(48, 48, 49) 49.500%,rgb(51, 51, 51) 50.500%,rgb(51, 51, 51) 100%);box-shadow:inset 0 0 0 1px rgba(128,128,128,.35)"></div>
<div class="t" style="top:684.20px;font-size:13px;color:#f0f0f0;left:653.00px;transform:translateX(-50%);transform-origin:50% 0;">20</div>
<div class="a " style="left:696.125px;top:574px;width:65.4px;height:106px;border:1px solid #f2f2f2;background:linear-gradient(180deg,rgb(62, 62, 62) 0,rgb(62, 62, 62) 49.500%,rgb(64, 64, 64) 50.500%,rgb(64, 64, 64) 100%);box-shadow:inset 0 0 0 1px rgba(128,128,128,.35)"></div>
<div class="t" style="top:684.20px;font-size:13px;color:#f0f0f0;left:728.83px;transform:translateX(-50%);transform-origin:50% 0;">25</div>
<div class="a " style="left:771.95px;top:574px;width:65.4px;height:106px;border:1px solid #f2f2f2;background:linear-gradient(180deg,rgb(75, 75, 76) 0,rgb(75, 75, 76) 49.500%,rgb(76, 76, 76) 50.500%,rgb(76, 76, 76) 100%);box-shadow:inset 0 0 0 1px rgba(128,128,128,.35)"></div>
<div class="t" style="top:684.20px;font-size:13px;color:#f0f0f0;left:804.65px;transform:translateX(-50%);transform-origin:50% 0;">30</div>
<div class="a " style="left:847.775px;top:574px;width:65.4px;height:106px;border:1px solid #f2f2f2;background:linear-gradient(180deg,rgb(88, 89, 90) 0,rgb(88, 89, 90) 49.500%,rgb(89, 89, 89) 50.500%,rgb(89, 89, 89) 100%);box-shadow:inset 0 0 0 1px rgba(128,128,128,.35)"></div>
<div class="t" style="top:684.20px;font-size:13px;color:#f0f0f0;left:880.47px;transform:translateX(-50%);transform-origin:50% 0;">35</div>
<div class="a " style="left:923.6px;top:574px;width:65.4px;height:106px;border:1px solid #f2f2f2;background:linear-gradient(180deg,rgb(102, 102, 103) 0,rgb(102, 102, 103) 49.500%,rgb(102, 102, 102) 50.500%,rgb(102, 102, 102) 100%);box-shadow:inset 0 0 0 1px rgba(128,128,128,.35)"></div>
<div class="t" style="top:684.20px;font-size:13px;color:#f0f0f0;left:956.30px;transform:translateX(-50%);transform-origin:50% 0;">40</div>
<div class="a " style="left:999.425px;top:574px;width:65.4px;height:106px;border:1px solid #f2f2f2;background:linear-gradient(180deg,rgb(115, 116, 117) 0,rgb(115, 116, 117) 49.500%,rgb(115, 115, 115) 50.500%,rgb(115, 115, 115) 100%);box-shadow:inset 0 0 0 1px rgba(128,128,128,.35)"></div>
<div class="t" style="top:684.20px;font-size:13px;color:#f0f0f0;left:1032.12px;transform:translateX(-50%);transform-origin:50% 0;">45</div>
<div class="a " style="left:1075.25px;top:574px;width:65.4px;height:106px;border:1px solid #f2f2f2;background:linear-gradient(180deg,rgb(128, 129, 131) 0,rgb(128, 129, 131) 49.500%,rgb(128, 128, 128) 50.500%,rgb(128, 128, 128) 100%);box-shadow:inset 0 0 0 1px rgba(128,128,128,.35)"></div>
<div class="t" style="top:684.20px;font-size:13px;color:#f0f0f0;left:1107.95px;transform:translateX(-50%);transform-origin:50% 0;">50</div>
<div class="a " style="left:1151.08px;top:574px;width:65.4px;height:106px;border:1px solid #f2f2f2;background:linear-gradient(180deg,rgb(142, 142, 144) 0,rgb(142, 142, 144) 49.500%,rgb(140, 140, 140) 50.500%,rgb(140, 140, 140) 100%);box-shadow:inset 0 0 0 1px rgba(128,128,128,.35)"></div>
<div class="t" style="top:684.20px;font-size:13px;color:#f0f0f0;left:1183.78px;transform:translateX(-50%);transform-origin:50% 0;">55</div>
<div class="a " style="left:1226.9px;top:574px;width:65.4px;height:106px;border:1px solid #f2f2f2;background:linear-gradient(180deg,rgb(155, 155, 157) 0,rgb(155, 155, 157) 49.500%,rgb(153, 153, 153) 50.500%,rgb(153, 153, 153) 100%);box-shadow:inset 0 0 0 1px rgba(128,128,128,.35)"></div>
<div class="t" style="top:684.20px;font-size:13px;color:#f0f0f0;left:1259.60px;transform:translateX(-50%);transform-origin:50% 0;">60</div>
<div class="a " style="left:1302.72px;top:574px;width:65.4px;height:106px;border:1px solid #f2f2f2;background:linear-gradient(180deg,rgb(167, 168, 171) 0,rgb(167, 168, 171) 49.500%,rgb(166, 166, 166) 50.500%,rgb(166, 166, 166) 100%);box-shadow:inset 0 0 0 1px rgba(128,128,128,.35)"></div>
<div class="t" style="top:684.20px;font-size:13px;color:#f0f0f0;left:1335.42px;transform:translateX(-50%);transform-origin:50% 0;">65</div>
<div class="a " style="left:1378.55px;top:574px;width:65.4px;height:106px;border:1px solid #f2f2f2;background:linear-gradient(180deg,rgb(180, 181, 184) 0,rgb(180, 181, 184) 49.500%,rgb(178, 178, 178) 50.500%,rgb(178, 178, 178) 100%);box-shadow:inset 0 0 0 1px rgba(128,128,128,.35)"></div>
<div class="t" style="top:684.20px;font-size:13px;color:#f0f0f0;left:1411.25px;transform:translateX(-50%);transform-origin:50% 0;">70</div>
<div class="a " style="left:1454.38px;top:574px;width:65.4px;height:106px;border:1px solid #f2f2f2;background:linear-gradient(180deg,rgb(193, 194, 197) 0,rgb(193, 194, 197) 49.500%,rgb(191, 191, 191) 50.500%,rgb(191, 191, 191) 100%);box-shadow:inset 0 0 0 1px rgba(128,128,128,.35)"></div>
<div class="t" style="top:684.20px;font-size:13px;color:#f0f0f0;left:1487.08px;transform:translateX(-50%);transform-origin:50% 0;">75</div>
<div class="a " style="left:1530.2px;top:574px;width:65.4px;height:106px;border:1px solid #f2f2f2;background:linear-gradient(180deg,rgb(205, 207, 210) 0,rgb(205, 207, 210) 49.500%,rgb(204, 204, 204) 50.500%,rgb(204, 204, 204) 100%);box-shadow:inset 0 0 0 1px rgba(128,128,128,.35)"></div>
<div class="t" style="top:684.20px;font-size:13px;color:#f0f0f0;left:1562.90px;transform:translateX(-50%);transform-origin:50% 0;">80</div>
<div class="a " style="left:1606.03px;top:574px;width:65.4px;height:106px;border:1px solid #f2f2f2;background:linear-gradient(180deg,rgb(218, 219, 224) 0,rgb(218, 219, 224) 49.500%,rgb(217, 217, 217) 50.500%,rgb(217, 217, 217) 100%);box-shadow:inset 0 0 0 1px rgba(128,128,128,.35)"></div>
<div class="t" style="top:684.20px;font-size:13px;color:#f0f0f0;left:1638.73px;transform:translateX(-50%);transform-origin:50% 0;">85</div>
<div class="a " style="left:1681.85px;top:574px;width:65.4px;height:106px;border:1px solid #f2f2f2;background:linear-gradient(180deg,rgb(230, 232, 239) 0,rgb(230, 232, 239) 49.500%,rgb(230, 230, 230) 50.500%,rgb(230, 230, 230) 100%);box-shadow:inset 0 0 0 1px rgba(128,128,128,.35)"></div>
<div class="t" style="top:684.20px;font-size:13px;color:#f0f0f0;left:1714.55px;transform:translateX(-50%);transform-origin:50% 0;">90</div>
<div class="a " style="left:1757.67px;top:574px;width:65.4px;height:106px;border:1px solid #f2f2f2;background:linear-gradient(180deg,rgb(244, 246, 254) 0,rgb(244, 246, 254) 49.500%,rgb(242, 242, 242) 50.500%,rgb(242, 242, 242) 100%);box-shadow:inset 0 0 0 1px rgba(128,128,128,.35)"></div>
<div class="t" style="top:684.20px;font-size:13px;color:#f0f0f0;left:1790.38px;transform:translateX(-50%);transform-origin:50% 0;">95</div>
<div class="a " style="left:1833.5px;top:574px;width:65.4px;height:106px;border:1px solid #f2f2f2;background:linear-gradient(180deg,rgb(248, 250, 255) 0,rgb(248, 250, 255) 49.500%,rgb(249, 249, 249) 50.500%,rgb(249, 249, 249) 100%);box-shadow:inset 0 0 0 1px rgba(128,128,128,.35)"></div>
<div class="t" style="top:684.20px;font-size:13px;color:#f0f0f0;left:1866.20px;transform:translateX(-50%);transform-origin:50% 0;">100</div>
<div class="t" style="left:309px;top:597.800px;font-size:11.600px;color:#f0f0f0;font-weight:bold;transform:translate(-50%,-50%) rotate(-90deg)">Actual</div>
<div class="t" style="left:309px;top:657px;font-size:11.600px;color:#f0f0f0;font-weight:bold;transform:translate(-50%,-50%) rotate(-90deg)">Target</div>
<div class="t" style="top:748.05px;font-size:29px;color:#f2f2f2;left:222.00px;transform:scaleX(1.05975);transform-origin:0 0;">Current Reading</div>
<div class="t" style="top:794.86px;font-size:24.5px;color:#f2f2f2;left:222.00px;transform:scaleX(1.04663);transform-origin:0 0;">x: 0,3073</div>
<div class="t" style="top:794.86px;font-size:24.5px;color:#f2f2f2;left:376.50px;transform:scaleX(1.04963);transform-origin:0 0;">y: 0,322</div>
<div class="t" style="top:829.86px;font-size:24.5px;color:#f2f2f2;left:222.00px;transform:scaleX(1.07625);transform-origin:0 0;">u': 0,1967</div>
<div class="t" style="top:829.86px;font-size:24.5px;color:#f2f2f2;left:376.50px;transform:scaleX(1.06658);transform-origin:0 0;">v': 0,4637</div>
<div class="t" style="top:864.86px;font-size:24.5px;color:#f2f2f2;left:222.00px;transform:scaleX(1.09224);transform-origin:0 0;">cd/m²: 438,812</div>
<div class="t" style="top:899.86px;font-size:24.5px;color:#f2f2f2;left:222.00px;transform:scaleX(1.02695);transform-origin:0 0;">ΔE 2000: 3,58</div>
<div class="t" style="top:726.03px;font-size:14.5px;color:#dcdcdc;letter-spacing:-0.099px;left:688.45px;transform:translateX(-50%);transform-origin:50% 0;">CIE 1931 xy</div>
<div class="a " style="left:576.3px;top:742.3px;width:259.7px;height:171px;background:radial-gradient(ellipse 34% 40% at 44% 56%,rgba(255,255,255,.85) 0,rgba(255,255,255,0) 100%),radial-gradient(ellipse 34% 40% at 58% 38%,rgba(255,255,255,.65) 0,rgba(255,255,255,0) 100%),radial-gradient(ellipse 75% 80% at 49.600% 49.400%,rgba(255,255,255,.62) 0,rgba(255,255,255,0) 100%),conic-gradient(from 0deg at 49.600% 49.400%,#d8ffcc 0deg,#fbffcc 25deg,#ffdcb0 56.800deg,#ffa8ac 90deg,#ff7cac 123deg,#ffa0d8 150deg,#f4bcff 180deg,#c8bcff 205deg,#94bcff 237deg,#94f8ff 270deg,#80fcb8 303deg,#a8ffb8 335deg,#d8ffcc 360deg);border:1px solid #a8a8a8"></div>
<div class="t" style="top:923.03px;font-size:14.5px;color:#dcdcdc;left:587.60px;transform:translateX(-50%);transform-origin:50% 0;">0,29</div>
<div class="t" style="top:923.03px;font-size:14.5px;color:#dcdcdc;left:639.57px;transform:translateX(-50%);transform-origin:50% 0;">0,3</div>
<div class="t" style="top:923.03px;font-size:14.5px;color:#dcdcdc;left:691.54px;transform:translateX(-50%);transform-origin:50% 0;">0,31</div>
<div class="t" style="top:923.03px;font-size:14.5px;color:#dcdcdc;left:743.51px;transform:translateX(-50%);transform-origin:50% 0;">0,32</div>
<div class="t" style="top:923.03px;font-size:14.5px;color:#dcdcdc;left:795.48px;transform:translateX(-50%);transform-origin:50% 0;">0,33</div>
<div class="t" style="top:784.23px;font-size:14.5px;color:#dcdcdc;right:1350.20px;">0,34</div>
<div class="t" style="top:852.93px;font-size:14.5px;color:#dcdcdc;right:1350.20px;">0,32</div>
<svg style="left:0;top:0" width="1920" height="1080" viewBox="0 0 1920 1080"><defs><clipPath id="cclip"><rect x="576.3" y="742.3" width="259.70000000000005" height="171.0"/></clipPath></defs><path d="M609.500 913.500L836 770.800" stroke="#000" stroke-width="3" clip-path="url(#cclip)"/><path d="M587.6 913.3v5" stroke="#c8c8c8" stroke-width="1.200"/><path d="M639.6 913.3v5" stroke="#c8c8c8" stroke-width="1.200"/><path d="M691.5 913.3v5" stroke="#c8c8c8" stroke-width="1.200"/><path d="M743.5 913.3v5" stroke="#c8c8c8" stroke-width="1.200"/><path d="M795.5 913.3v5" stroke="#c8c8c8" stroke-width="1.200"/><path d="M571.3 791.3h5" stroke="#c8c8c8" stroke-width="1.200"/><path d="M571.3 860.0h5" stroke="#c8c8c8" stroke-width="1.200"/><rect x="699" y="820.500" width="12.500" height="12.500" fill="#fff" stroke="#000" stroke-width="2"/><circle cx="652" cy="871.800" r="4.500" fill="#111"/><circle cx="673.5" cy="857" r="4.100" fill="#222" stroke="#000" stroke-width="1.200"/><circle cx="674" cy="856.3" r="4.100" fill="#555" stroke="#000" stroke-width="1.200"/><circle cx="674.5" cy="855.5" r="4.100" fill="#777" stroke="#000" stroke-width="1.200"/><circle cx="675" cy="855" r="4.100" fill="#999" stroke="#000" stroke-width="1.200"/><circle cx="675.5" cy="854.3" r="4.100" fill="#bbb" stroke="#000" stroke-width="1.200"/><circle cx="676" cy="853.5" r="4.100" fill="#ddd" stroke="#000" stroke-width="1.200"/><circle cx="677" cy="852" r="4.100" fill="#fff" stroke="#000" stroke-width="1.200"/></svg>
<div class="a " style="left:847.3px;top:712.9px;width:949.7px;height:26px;background:linear-gradient(180deg,#2f2f2f 0,#2b2b2b 50%,#171717 53%,#202020 100%)"></div>
<div class="a " style="left:847.3px;top:713.3px;width:8px;height:25.6px;background:#000"></div>
<div class="t" style="top:720.76px;font-size:12.8px;color:#f0f0f0;left:938.20px;transform:scaleX(0.7);transform-origin:0 0;">0</div>
<div class="t" style="top:720.76px;font-size:12.8px;color:#f0f0f0;left:984.50px;transform:scaleX(0.7);transform-origin:0 0;">5</div>
<div class="t" style="top:720.76px;font-size:12.8px;color:#f0f0f0;left:1025.40px;transform:scaleX(0.7);transform-origin:0 0;">10</div>
<div class="t" style="top:720.76px;font-size:12.8px;color:#f0f0f0;left:1066.00px;transform:scaleX(0.7);transform-origin:0 0;">15</div>
<div class="t" style="top:720.76px;font-size:12.8px;color:#f0f0f0;left:1106.70px;transform:scaleX(0.7);transform-origin:0 0;">20</div>
<div class="t" style="top:720.76px;font-size:12.8px;color:#f0f0f0;left:1147.30px;transform:scaleX(0.7);transform-origin:0 0;">25</div>
<div class="t" style="top:720.76px;font-size:12.8px;color:#f0f0f0;left:1188.20px;transform:scaleX(0.7);transform-origin:0 0;">30</div>
<div class="t" style="top:720.76px;font-size:12.8px;color:#f0f0f0;left:1228.80px;transform:scaleX(0.7);transform-origin:0 0;">35</div>
<div class="t" style="top:720.76px;font-size:12.8px;color:#f0f0f0;left:1269.70px;transform:scaleX(0.7);transform-origin:0 0;">40</div>
<div class="t" style="top:720.76px;font-size:12.8px;color:#f0f0f0;left:1310.30px;transform:scaleX(0.7);transform-origin:0 0;">45</div>
<div class="t" style="top:720.76px;font-size:12.8px;color:#f0f0f0;left:1351.00px;transform:scaleX(0.7);transform-origin:0 0;">50</div>
<div class="t" style="top:720.76px;font-size:12.8px;color:#f0f0f0;left:1391.90px;transform:scaleX(0.7);transform-origin:0 0;">55</div>
<div class="t" style="top:720.76px;font-size:12.8px;color:#f0f0f0;left:1432.80px;transform:scaleX(0.7);transform-origin:0 0;">60</div>
<div class="t" style="top:720.76px;font-size:12.8px;color:#f0f0f0;left:1473.40px;transform:scaleX(0.7);transform-origin:0 0;">65</div>
<div class="t" style="top:720.76px;font-size:12.8px;color:#f0f0f0;left:1514.30px;transform:scaleX(0.7);transform-origin:0 0;">70</div>
<div class="t" style="top:720.76px;font-size:12.8px;color:#f0f0f0;left:1554.90px;transform:scaleX(0.7);transform-origin:0 0;">75</div>
<div class="t" style="top:720.76px;font-size:12.8px;color:#f0f0f0;left:1595.50px;transform:scaleX(0.7);transform-origin:0 0;">80</div>
<div class="t" style="top:720.76px;font-size:12.8px;color:#f0f0f0;left:1636.40px;transform:scaleX(0.7);transform-origin:0 0;">85</div>
<div class="t" style="top:720.76px;font-size:12.8px;color:#f0f0f0;left:1677.00px;transform:scaleX(0.7);transform-origin:0 0;">90</div>
<div class="t" style="top:720.76px;font-size:12.8px;color:#f0f0f0;left:1717.70px;transform:scaleX(0.7);transform-origin:0 0;">95</div>
<div class="t" style="top:720.76px;font-size:12.8px;color:#f0f0f0;left:1758.50px;transform:scaleX(0.7);transform-origin:0 0;">100</div>
<div class="a " style="left:855.3px;top:738.9px;width:941.7px;height:23.93px;background:#404040"></div>
<div class="a " style="left:847.3px;top:738.9px;width:8px;height:23.93px;background:#1c1c1c"></div>
<div class="t" style="top:743.73px;font-size:15.4px;color:#f0f0f0;left:857.80px;transform:scaleX(0.574007);transform-origin:0 0;">x: CIE31</div>
<div class="t" style="top:743.73px;font-size:15.4px;color:#f0f0f0;left:938.20px;transform:scaleX(0.606);transform-origin:0 0;">0,25</div>
<div class="t" style="top:743.73px;font-size:15.4px;color:#f0f0f0;left:984.50px;transform:scaleX(0.606);transform-origin:0 0;">0,29</div>
<div class="t" style="top:743.73px;font-size:15.4px;color:#f0f0f0;left:1025.40px;transform:scaleX(0.606);transform-origin:0 0;">0,30</div>
<div class="t" style="top:743.73px;font-size:15.4px;color:#f0f0f0;left:1066.00px;transform:scaleX(0.606);transform-origin:0 0;">0,31</div>
<div class="t" style="top:743.73px;font-size:15.4px;color:#f0f0f0;left:1106.70px;transform:scaleX(0.606);transform-origin:0 0;">0,31</div>
<div class="t" style="top:743.73px;font-size:15.4px;color:#f0f0f0;left:1147.30px;transform:scaleX(0.606);transform-origin:0 0;">0,31</div>
<div class="t" style="top:743.73px;font-size:15.4px;color:#f0f0f0;left:1188.20px;transform:scaleX(0.606);transform-origin:0 0;">0,31</div>
<div class="t" style="top:743.73px;font-size:15.4px;color:#f0f0f0;left:1228.80px;transform:scaleX(0.606);transform-origin:0 0;">0,31</div>
<div class="t" style="top:743.73px;font-size:15.4px;color:#f0f0f0;left:1269.70px;transform:scaleX(0.606);transform-origin:0 0;">0,31</div>
<div class="t" style="top:743.73px;font-size:15.4px;color:#f0f0f0;left:1310.30px;transform:scaleX(0.606);transform-origin:0 0;">0,31</div>
<div class="t" style="top:743.73px;font-size:15.4px;color:#f0f0f0;left:1351.00px;transform:scaleX(0.606);transform-origin:0 0;">0,31</div>
<div class="t" style="top:743.73px;font-size:15.4px;color:#f0f0f0;left:1391.90px;transform:scaleX(0.606);transform-origin:0 0;">0,31</div>
<div class="t" style="top:743.73px;font-size:15.4px;color:#f0f0f0;left:1432.80px;transform:scaleX(0.606);transform-origin:0 0;">0,31</div>
<div class="t" style="top:743.73px;font-size:15.4px;color:#f0f0f0;left:1473.40px;transform:scaleX(0.606);transform-origin:0 0;">0,31</div>
<div class="t" style="top:743.73px;font-size:15.4px;color:#f0f0f0;left:1514.30px;transform:scaleX(0.606);transform-origin:0 0;">0,31</div>
<div class="t" style="top:743.73px;font-size:15.4px;color:#f0f0f0;left:1554.90px;transform:scaleX(0.606);transform-origin:0 0;">0,31</div>
<div class="t" style="top:743.73px;font-size:15.4px;color:#f0f0f0;left:1595.50px;transform:scaleX(0.606);transform-origin:0 0;">0,31</div>
<div class="t" style="top:743.73px;font-size:15.4px;color:#f0f0f0;left:1636.40px;transform:scaleX(0.606);transform-origin:0 0;">0,31</div>
<div class="t" style="top:743.73px;font-size:15.4px;color:#f0f0f0;left:1677.00px;transform:scaleX(0.606);transform-origin:0 0;">0,31</div>
<div class="t" style="top:743.73px;font-size:15.4px;color:#f0f0f0;left:1717.70px;transform:scaleX(0.606);transform-origin:0 0;">0,31</div>
<div class="t" style="top:743.73px;font-size:15.4px;color:#f0f0f0;left:1758.50px;transform:scaleX(0.606);transform-origin:0 0;">0,31</div>
<div class="a " style="left:855.3px;top:762.83px;width:941.7px;height:23.93px;background:#808080"></div>
<div class="a " style="left:847.3px;top:762.83px;width:8px;height:23.93px;background:#2e2e2e"></div>
<div class="t" style="top:767.66px;font-size:15.4px;color:#f0f0f0;left:857.80px;transform:scaleX(0.574007);transform-origin:0 0;">y: CIE31</div>
<div class="t" style="top:767.66px;font-size:15.4px;color:#f0f0f0;left:938.20px;transform:scaleX(0.606);transform-origin:0 0;">0,26</div>
<div class="t" style="top:767.66px;font-size:15.4px;color:#f0f0f0;left:984.50px;transform:scaleX(0.606);transform-origin:0 0;">0,30</div>
<div class="t" style="top:767.66px;font-size:15.4px;color:#f0f0f0;left:1025.40px;transform:scaleX(0.606);transform-origin:0 0;">0,32</div>
<div class="t" style="top:767.66px;font-size:15.4px;color:#f0f0f0;left:1066.00px;transform:scaleX(0.606);transform-origin:0 0;">0,32</div>
<div class="t" style="top:767.66px;font-size:15.4px;color:#f0f0f0;left:1106.70px;transform:scaleX(0.606);transform-origin:0 0;">0,32</div>
<div class="t" style="top:767.66px;font-size:15.4px;color:#f0f0f0;left:1147.30px;transform:scaleX(0.606);transform-origin:0 0;">0,32</div>
<div class="t" style="top:767.66px;font-size:15.4px;color:#f0f0f0;left:1188.20px;transform:scaleX(0.606);transform-origin:0 0;">0,32</div>
<div class="t" style="top:767.66px;font-size:15.4px;color:#f0f0f0;left:1228.80px;transform:scaleX(0.606);transform-origin:0 0;">0,32</div>
<div class="t" style="top:767.66px;font-size:15.4px;color:#f0f0f0;left:1269.70px;transform:scaleX(0.606);transform-origin:0 0;">0,32</div>
<div class="t" style="top:767.66px;font-size:15.4px;color:#f0f0f0;left:1310.30px;transform:scaleX(0.606);transform-origin:0 0;">0,32</div>
<div class="t" style="top:767.66px;font-size:15.4px;color:#f0f0f0;left:1351.00px;transform:scaleX(0.606);transform-origin:0 0;">0,32</div>
<div class="t" style="top:767.66px;font-size:15.4px;color:#f0f0f0;left:1391.90px;transform:scaleX(0.606);transform-origin:0 0;">0,32</div>
<div class="t" style="top:767.66px;font-size:15.4px;color:#f0f0f0;left:1432.80px;transform:scaleX(0.606);transform-origin:0 0;">0,32</div>
<div class="t" style="top:767.66px;font-size:15.4px;color:#f0f0f0;left:1473.40px;transform:scaleX(0.606);transform-origin:0 0;">0,32</div>
<div class="t" style="top:767.66px;font-size:15.4px;color:#f0f0f0;left:1514.30px;transform:scaleX(0.606);transform-origin:0 0;">0,32</div>
<div class="t" style="top:767.66px;font-size:15.4px;color:#f0f0f0;left:1554.90px;transform:scaleX(0.606);transform-origin:0 0;">0,32</div>
<div class="t" style="top:767.66px;font-size:15.4px;color:#f0f0f0;left:1595.50px;transform:scaleX(0.606);transform-origin:0 0;">0,32</div>
<div class="t" style="top:767.66px;font-size:15.4px;color:#f0f0f0;left:1636.40px;transform:scaleX(0.606);transform-origin:0 0;">0,32</div>
<div class="t" style="top:767.66px;font-size:15.4px;color:#f0f0f0;left:1677.00px;transform:scaleX(0.606);transform-origin:0 0;">0,32</div>
<div class="t" style="top:767.66px;font-size:15.4px;color:#f0f0f0;left:1717.70px;transform:scaleX(0.606);transform-origin:0 0;">0,32</div>
<div class="t" style="top:767.66px;font-size:15.4px;color:#f0f0f0;left:1758.50px;transform:scaleX(0.606);transform-origin:0 0;">0,32</div>
<div class="a " style="left:855.3px;top:786.76px;width:941.7px;height:23.93px;background:#404040"></div>
<div class="a " style="left:847.3px;top:786.76px;width:8px;height:23.93px;background:#1c1c1c"></div>
<div class="t" style="top:791.59px;font-size:15.4px;color:#f0f0f0;left:857.80px;transform:scaleX(0.554917);transform-origin:0 0;">Y</div>
<div class="t" style="top:791.59px;font-size:15.4px;color:#f0f0f0;left:938.20px;transform:scaleX(0.606);transform-origin:0 0;">0,24</div>
<div class="t" style="top:791.59px;font-size:15.4px;color:#f0f0f0;left:984.50px;transform:scaleX(0.606);transform-origin:0 0;">0,87</div>
<div class="t" style="top:791.59px;font-size:15.4px;color:#f0f0f0;left:1025.40px;transform:scaleX(0.606);transform-origin:0 0;">3,10</div>
<div class="t" style="top:791.59px;font-size:15.4px;color:#f0f0f0;left:1066.00px;transform:scaleX(0.606);transform-origin:0 0;">6,84</div>
<div class="t" style="top:791.59px;font-size:15.4px;color:#f0f0f0;left:1106.70px;transform:scaleX(0.606);transform-origin:0 0;">12,85</div>
<div class="t" style="top:791.59px;font-size:15.4px;color:#f0f0f0;left:1147.30px;transform:scaleX(0.606);transform-origin:0 0;">21,02</div>
<div class="t" style="top:791.59px;font-size:15.4px;color:#f0f0f0;left:1188.20px;transform:scaleX(0.606);transform-origin:0 0;">30,43</div>
<div class="t" style="top:791.59px;font-size:15.4px;color:#f0f0f0;left:1228.80px;transform:scaleX(0.606);transform-origin:0 0;">42,97</div>
<div class="t" style="top:791.59px;font-size:15.4px;color:#f0f0f0;left:1269.70px;transform:scaleX(0.606);transform-origin:0 0;">57,99</div>
<div class="t" style="top:791.59px;font-size:15.4px;color:#f0f0f0;left:1310.30px;transform:scaleX(0.606);transform-origin:0 0;">75,40</div>
<div class="t" style="top:791.59px;font-size:15.4px;color:#f0f0f0;left:1351.00px;transform:scaleX(0.606);transform-origin:0 0;">95,48</div>
<div class="t" style="top:791.59px;font-size:15.4px;color:#f0f0f0;left:1391.90px;transform:scaleX(0.606);transform-origin:0 0;">116,40</div>
<div class="t" style="top:791.59px;font-size:15.4px;color:#f0f0f0;left:1432.80px;transform:scaleX(0.606);transform-origin:0 0;">141,59</div>
<div class="t" style="top:791.59px;font-size:15.4px;color:#f0f0f0;left:1473.40px;transform:scaleX(0.606);transform-origin:0 0;">169,41</div>
<div class="t" style="top:791.59px;font-size:15.4px;color:#f0f0f0;left:1514.30px;transform:scaleX(0.606);transform-origin:0 0;">197,83</div>
<div class="t" style="top:791.59px;font-size:15.4px;color:#f0f0f0;left:1554.90px;transform:scaleX(0.606);transform-origin:0 0;">231,08</div>
<div class="t" style="top:791.59px;font-size:15.4px;color:#f0f0f0;left:1595.50px;transform:scaleX(0.606);transform-origin:0 0;">267,47</div>
<div class="t" style="top:791.59px;font-size:15.4px;color:#f0f0f0;left:1636.40px;transform:scaleX(0.606);transform-origin:0 0;">306,96</div>
<div class="t" style="top:791.59px;font-size:15.4px;color:#f0f0f0;left:1677.00px;transform:scaleX(0.606);transform-origin:0 0;">349,57</div>
<div class="t" style="top:791.59px;font-size:15.4px;color:#f0f0f0;left:1717.70px;transform:scaleX(0.606);transform-origin:0 0;">394,91</div>
<div class="t" style="top:791.59px;font-size:15.4px;color:#f0f0f0;left:1758.50px;transform:scaleX(0.606);transform-origin:0 0;">438,81</div>
<div class="a " style="left:855.3px;top:810.69px;width:941.7px;height:23.93px;background:#808080"></div>
<div class="a " style="left:847.3px;top:810.69px;width:8px;height:23.93px;background:#2e2e2e"></div>
<div class="t" style="top:815.52px;font-size:15.4px;color:#f0f0f0;left:857.80px;transform:scaleX(0.634269);transform-origin:0 0;">Target Y</div>
<div class="t" style="top:815.52px;font-size:15.4px;color:#f0f0f0;left:938.20px;transform:scaleX(0.606);transform-origin:0 0;">0,00</div>
<div class="t" style="top:815.52px;font-size:15.4px;color:#f0f0f0;left:984.50px;transform:scaleX(0.606);transform-origin:0 0;">1,77</div>
<div class="t" style="top:815.52px;font-size:15.4px;color:#f0f0f0;left:1025.40px;transform:scaleX(0.606);transform-origin:0 0;">4,53</div>
<div class="t" style="top:815.52px;font-size:15.4px;color:#f0f0f0;left:1066.00px;transform:scaleX(0.606);transform-origin:0 0;">8,51</div>
<div class="t" style="top:815.52px;font-size:15.4px;color:#f0f0f0;left:1106.70px;transform:scaleX(0.606);transform-origin:0 0;">14,53</div>
<div class="t" style="top:815.52px;font-size:15.4px;color:#f0f0f0;left:1147.30px;transform:scaleX(0.606);transform-origin:0 0;">22,50</div>
<div class="t" style="top:815.52px;font-size:15.4px;color:#f0f0f0;left:1188.20px;transform:scaleX(0.606);transform-origin:0 0;">31,71</div>
<div class="t" style="top:815.52px;font-size:15.4px;color:#f0f0f0;left:1228.80px;transform:scaleX(0.606);transform-origin:0 0;">43,84</div>
<div class="t" style="top:815.52px;font-size:15.4px;color:#f0f0f0;left:1269.70px;transform:scaleX(0.606);transform-origin:0 0;">58,30</div>
<div class="t" style="top:815.52px;font-size:15.4px;color:#f0f0f0;left:1310.30px;transform:scaleX(0.606);transform-origin:0 0;">75,23</div>
<div class="t" style="top:815.52px;font-size:15.4px;color:#f0f0f0;left:1351.00px;transform:scaleX(0.606);transform-origin:0 0;">94,72</div>
<div class="t" style="top:815.52px;font-size:15.4px;color:#f0f0f0;left:1391.90px;transform:scaleX(0.606);transform-origin:0 0;">115,08</div>
<div class="t" style="top:815.52px;font-size:15.4px;color:#f0f0f0;left:1432.80px;transform:scaleX(0.606);transform-origin:0 0;">139,78</div>
<div class="t" style="top:815.52px;font-size:15.4px;color:#f0f0f0;left:1473.40px;transform:scaleX(0.606);transform-origin:0 0;">167,33</div>
<div class="t" style="top:815.52px;font-size:15.4px;color:#f0f0f0;left:1514.30px;transform:scaleX(0.606);transform-origin:0 0;">195,36</div>
<div class="t" style="top:815.52px;font-size:15.4px;color:#f0f0f0;left:1554.90px;transform:scaleX(0.606);transform-origin:0 0;">228,62</div>
<div class="t" style="top:815.52px;font-size:15.4px;color:#f0f0f0;left:1595.50px;transform:scaleX(0.606);transform-origin:0 0;">264,97</div>
<div class="t" style="top:815.52px;font-size:15.4px;color:#f0f0f0;left:1636.40px;transform:scaleX(0.606);transform-origin:0 0;">304,48</div>
<div class="t" style="top:815.52px;font-size:15.4px;color:#f0f0f0;left:1677.00px;transform:scaleX(0.606);transform-origin:0 0;">347,23</div>
<div class="t" style="top:815.52px;font-size:15.4px;color:#f0f0f0;left:1717.70px;transform:scaleX(0.606);transform-origin:0 0;">389,63</div>
<div class="t" style="top:815.52px;font-size:15.4px;color:#f0f0f0;left:1758.50px;transform:scaleX(0.606);transform-origin:0 0;">438,81</div>
<div class="a " style="left:855.3px;top:834.62px;width:941.7px;height:23.93px;background:#404040"></div>
<div class="a " style="left:847.3px;top:834.62px;width:8px;height:23.93px;background:#1c1c1c"></div>
<div class="t" style="top:839.45px;font-size:15.4px;color:#f0f0f0;left:857.80px;transform:scaleX(0.651202);transform-origin:0 0;">Gamma Log/Log</div>
<div class="t" style="top:839.45px;font-size:15.4px;color:#f0f0f0;left:938.20px;transform:scaleX(0.606);transform-origin:0 0;">1,28</div>
<div class="t" style="top:839.45px;font-size:15.4px;color:#f0f0f0;left:984.50px;transform:scaleX(0.606);transform-origin:0 0;">2,09</div>
<div class="t" style="top:839.45px;font-size:15.4px;color:#f0f0f0;left:1025.40px;transform:scaleX(0.606);transform-origin:0 0;">2,17</div>
<div class="t" style="top:839.45px;font-size:15.4px;color:#f0f0f0;left:1066.00px;transform:scaleX(0.606);transform-origin:0 0;">2,19</div>
<div class="t" style="top:839.45px;font-size:15.4px;color:#f0f0f0;left:1106.70px;transform:scaleX(0.606);transform-origin:0 0;">2,19</div>
<div class="t" style="top:839.45px;font-size:15.4px;color:#f0f0f0;left:1147.30px;transform:scaleX(0.606);transform-origin:0 0;">2,20</div>
<div class="t" style="top:839.45px;font-size:15.4px;color:#f0f0f0;left:1188.20px;transform:scaleX(0.606);transform-origin:0 0;">2,20</div>
<div class="t" style="top:839.45px;font-size:15.4px;color:#f0f0f0;left:1228.80px;transform:scaleX(0.606);transform-origin:0 0;">2,21</div>
<div class="t" style="top:839.45px;font-size:15.4px;color:#f0f0f0;left:1269.70px;transform:scaleX(0.606);transform-origin:0 0;">2,21</div>
<div class="t" style="top:839.45px;font-size:15.4px;color:#f0f0f0;left:1310.30px;transform:scaleX(0.606);transform-origin:0 0;">2,21</div>
<div class="t" style="top:839.45px;font-size:15.4px;color:#f0f0f0;left:1351.00px;transform:scaleX(0.606);transform-origin:0 0;">2,21</div>
<div class="t" style="top:839.45px;font-size:15.4px;color:#f0f0f0;left:1391.90px;transform:scaleX(0.606);transform-origin:0 0;">2,21</div>
<div class="t" style="top:839.45px;font-size:15.4px;color:#f0f0f0;left:1432.80px;transform:scaleX(0.606);transform-origin:0 0;">2,21</div>
<div class="t" style="top:839.45px;font-size:15.4px;color:#f0f0f0;left:1473.40px;transform:scaleX(0.606);transform-origin:0 0;">2,22</div>
<div class="t" style="top:839.45px;font-size:15.4px;color:#f0f0f0;left:1514.30px;transform:scaleX(0.606);transform-origin:0 0;">2,22</div>
<div class="t" style="top:839.45px;font-size:15.4px;color:#f0f0f0;left:1554.90px;transform:scaleX(0.606);transform-origin:0 0;">2,22</div>
<div class="t" style="top:839.45px;font-size:15.4px;color:#f0f0f0;left:1595.50px;transform:scaleX(0.606);transform-origin:0 0;">2,22</div>
<div class="t" style="top:839.45px;font-size:15.4px;color:#f0f0f0;left:1636.40px;transform:scaleX(0.606);transform-origin:0 0;">2,21</div>
<div class="t" style="top:839.45px;font-size:15.4px;color:#f0f0f0;left:1677.00px;transform:scaleX(0.606);transform-origin:0 0;">2,20</div>
<div class="t" style="top:839.45px;font-size:15.4px;color:#f0f0f0;left:1717.70px;transform:scaleX(0.606);transform-origin:0 0;">2,01</div>
<div class="t" style="top:839.45px;font-size:15.4px;color:#f0f0f0;left:1758.50px;transform:scaleX(0.606);transform-origin:0 0;">2,27</div>
<div class="a " style="left:855.3px;top:858.55px;width:941.7px;height:23.93px;background:#808080"></div>
<div class="a " style="left:847.3px;top:858.55px;width:8px;height:23.93px;background:#2e2e2e"></div>
<div class="t" style="top:863.38px;font-size:15.4px;color:#f0f0f0;left:857.80px;transform:scaleX(0.549765);transform-origin:0 0;">CCT</div>
<div class="t" style="top:863.38px;font-size:15.4px;color:#f0f0f0;left:938.20px;transform:scaleX(0.606);transform-origin:0 0;">18572,00</div>
<div class="t" style="top:863.38px;font-size:15.4px;color:#f0f0f0;left:984.50px;transform:scaleX(0.606);transform-origin:0 0;">9077,00</div>
<div class="t" style="top:863.38px;font-size:15.4px;color:#f0f0f0;left:1025.40px;transform:scaleX(0.606);transform-origin:0 0;">7259,00</div>
<div class="t" style="top:863.38px;font-size:15.4px;color:#f0f0f0;left:1066.00px;transform:scaleX(0.606);transform-origin:0 0;">6925,00</div>
<div class="t" style="top:863.38px;font-size:15.4px;color:#f0f0f0;left:1106.70px;transform:scaleX(0.606);transform-origin:0 0;">6936,00</div>
<div class="t" style="top:863.38px;font-size:15.4px;color:#f0f0f0;left:1147.30px;transform:scaleX(0.606);transform-origin:0 0;">6938,00</div>
<div class="t" style="top:863.38px;font-size:15.4px;color:#f0f0f0;left:1188.20px;transform:scaleX(0.606);transform-origin:0 0;">6937,00</div>
<div class="t" style="top:863.38px;font-size:15.4px;color:#f0f0f0;left:1228.80px;transform:scaleX(0.606);transform-origin:0 0;">6947,00</div>
<div class="t" style="top:863.38px;font-size:15.4px;color:#f0f0f0;left:1269.70px;transform:scaleX(0.606);transform-origin:0 0;">6940,00</div>
<div class="t" style="top:863.38px;font-size:15.4px;color:#f0f0f0;left:1310.30px;transform:scaleX(0.606);transform-origin:0 0;">6931,00</div>
<div class="t" style="top:863.38px;font-size:15.4px;color:#f0f0f0;left:1351.00px;transform:scaleX(0.606);transform-origin:0 0;">6935,00</div>
<div class="t" style="top:863.38px;font-size:15.4px;color:#f0f0f0;left:1391.90px;transform:scaleX(0.606);transform-origin:0 0;">6931,00</div>
<div class="t" style="top:863.38px;font-size:15.4px;color:#f0f0f0;left:1432.80px;transform:scaleX(0.606);transform-origin:0 0;">6918,00</div>
<div class="t" style="top:863.38px;font-size:15.4px;color:#f0f0f0;left:1473.40px;transform:scaleX(0.606);transform-origin:0 0;">6918,00</div>
<div class="t" style="top:863.38px;font-size:15.4px;color:#f0f0f0;left:1514.30px;transform:scaleX(0.606);transform-origin:0 0;">6913,00</div>
<div class="t" style="top:863.38px;font-size:15.4px;color:#f0f0f0;left:1554.90px;transform:scaleX(0.606);transform-origin:0 0;">6904,00</div>
<div class="t" style="top:863.38px;font-size:15.4px;color:#f0f0f0;left:1595.50px;transform:scaleX(0.606);transform-origin:0 0;">6903,00</div>
<div class="t" style="top:863.38px;font-size:15.4px;color:#f0f0f0;left:1636.40px;transform:scaleX(0.606);transform-origin:0 0;">6896,00</div>
<div class="t" style="top:863.38px;font-size:15.4px;color:#f0f0f0;left:1677.00px;transform:scaleX(0.606);transform-origin:0 0;">6889,00</div>
<div class="t" style="top:863.38px;font-size:15.4px;color:#f0f0f0;left:1717.70px;transform:scaleX(0.606);transform-origin:0 0;">6882,00</div>
<div class="t" style="top:863.38px;font-size:15.4px;color:#f0f0f0;left:1758.50px;transform:scaleX(0.606);transform-origin:0 0;">6875,00</div>
<div class="a " style="left:855.3px;top:882.48px;width:941.7px;height:23.93px;background:#404040"></div>
<div class="a " style="left:847.3px;top:882.48px;width:8px;height:23.93px;background:#1c1c1c"></div>
<div class="t" style="top:887.31px;font-size:15.4px;color:#f0f0f0;left:857.80px;transform:scaleX(0.617636);transform-origin:0 0;">ΔE 2000</div>
<div class="t" style="top:887.31px;font-size:15.4px;color:#f0f0f0;left:938.20px;transform:scaleX(0.606);transform-origin:0 0;">0,68</div>
<div class="t" style="top:887.31px;font-size:15.4px;color:#f0f0f0;left:984.50px;transform:scaleX(0.606);transform-origin:0 0;">1,42</div>
<div class="t" style="top:887.31px;font-size:15.4px;color:#f0f0f0;left:1025.40px;transform:scaleX(0.606);transform-origin:0 0;">2,12</div>
<div class="t" style="top:887.31px;font-size:15.4px;color:#f0f0f0;left:1066.00px;transform:scaleX(0.606);transform-origin:0 0;">1,79</div>
<div class="t" style="top:887.31px;font-size:15.4px;color:#f0f0f0;left:1106.70px;transform:scaleX(0.606);transform-origin:0 0;">1,75</div>
<div class="t" style="top:887.31px;font-size:15.4px;color:#f0f0f0;left:1147.30px;transform:scaleX(0.606);transform-origin:0 0;">1,81</div>
<div class="t" style="top:887.31px;font-size:15.4px;color:#f0f0f0;left:1188.20px;transform:scaleX(0.606);transform-origin:0 0;">1,97</div>
<div class="t" style="top:887.31px;font-size:15.4px;color:#f0f0f0;left:1228.80px;transform:scaleX(0.606);transform-origin:0 0;">2,19</div>
<div class="t" style="top:887.31px;font-size:15.4px;color:#f0f0f0;left:1269.70px;transform:scaleX(0.606);transform-origin:0 0;">2,37</div>
<div class="t" style="top:887.31px;font-size:15.4px;color:#f0f0f0;left:1310.30px;transform:scaleX(0.606);transform-origin:0 0;">2,50</div>
<div class="t" style="top:887.31px;font-size:15.4px;color:#f0f0f0;left:1351.00px;transform:scaleX(0.606);transform-origin:0 0;">2,66</div>
<div class="t" style="top:887.31px;font-size:15.4px;color:#f0f0f0;left:1391.90px;transform:scaleX(0.606);transform-origin:0 0;">2,83</div>
<div class="t" style="top:887.31px;font-size:15.4px;color:#f0f0f0;left:1432.80px;transform:scaleX(0.606);transform-origin:0 0;">2,91</div>
<div class="t" style="top:887.31px;font-size:15.4px;color:#f0f0f0;left:1473.40px;transform:scaleX(0.606);transform-origin:0 0;">3,09</div>
<div class="t" style="top:887.31px;font-size:15.4px;color:#f0f0f0;left:1514.30px;transform:scaleX(0.606);transform-origin:0 0;">3,17</div>
<div class="t" style="top:887.31px;font-size:15.4px;color:#f0f0f0;left:1554.90px;transform:scaleX(0.606);transform-origin:0 0;">3,26</div>
<div class="t" style="top:887.31px;font-size:15.4px;color:#f0f0f0;left:1595.50px;transform:scaleX(0.606);transform-origin:0 0;">3,36</div>
<div class="t" style="top:887.31px;font-size:15.4px;color:#f0f0f0;left:1636.40px;transform:scaleX(0.606);transform-origin:0 0;">3,43</div>
<div class="t" style="top:887.31px;font-size:15.4px;color:#f0f0f0;left:1677.00px;transform:scaleX(0.606);transform-origin:0 0;">3,52</div>
<div class="t" style="top:887.31px;font-size:15.4px;color:#f0f0f0;left:1717.70px;transform:scaleX(0.606);transform-origin:0 0;">3,56</div>
<div class="t" style="top:887.31px;font-size:15.4px;color:#f0f0f0;left:1758.50px;transform:scaleX(0.606);transform-origin:0 0;">3,58</div>
<div class="a " style="left:855.3px;top:906.41px;width:941.7px;height:23.93px;background:#808080"></div>
<div class="a " style="left:847.3px;top:906.41px;width:8px;height:23.93px;background:#2e2e2e"></div>
<div class="t" style="top:911.24px;font-size:15.4px;color:#f0f0f0;left:857.80px;transform:scaleX(0.572511);transform-origin:0 0;">dEITP</div>
<div class="t" style="top:911.24px;font-size:15.4px;color:#f0f0f0;left:938.20px;transform:scaleX(0.606);transform-origin:0 0;">65,75</div>
<div class="t" style="top:911.24px;font-size:15.4px;color:#f0f0f0;left:984.50px;transform:scaleX(0.606);transform-origin:0 0;">28,13</div>
<div class="t" style="top:911.24px;font-size:15.4px;color:#f0f0f0;left:1025.40px;transform:scaleX(0.606);transform-origin:0 0;">18,65</div>
<div class="t" style="top:911.24px;font-size:15.4px;color:#f0f0f0;left:1066.00px;transform:scaleX(0.606);transform-origin:0 0;">12,11</div>
<div class="t" style="top:911.24px;font-size:15.4px;color:#f0f0f0;left:1106.70px;transform:scaleX(0.606);transform-origin:0 0;">7,80</div>
<div class="t" style="top:911.24px;font-size:15.4px;color:#f0f0f0;left:1147.30px;transform:scaleX(0.606);transform-origin:0 0;">5,33</div>
<div class="t" style="top:911.24px;font-size:15.4px;color:#f0f0f0;left:1188.20px;transform:scaleX(0.606);transform-origin:0 0;">4,33</div>
<div class="t" style="top:911.24px;font-size:15.4px;color:#f0f0f0;left:1228.80px;transform:scaleX(0.606);transform-origin:0 0;">3,88</div>
<div class="t" style="top:911.24px;font-size:15.4px;color:#f0f0f0;left:1269.70px;transform:scaleX(0.606);transform-origin:0 0;">3,74</div>
<div class="t" style="top:911.24px;font-size:15.4px;color:#f0f0f0;left:1310.30px;transform:scaleX(0.606);transform-origin:0 0;">3,75</div>
<div class="t" style="top:911.24px;font-size:15.4px;color:#f0f0f0;left:1351.00px;transform:scaleX(0.606);transform-origin:0 0;">3,87</div>
<div class="t" style="top:911.24px;font-size:15.4px;color:#f0f0f0;left:1391.90px;transform:scaleX(0.606);transform-origin:0 0;">3,95</div>
<div class="t" style="top:911.24px;font-size:15.4px;color:#f0f0f0;left:1432.80px;transform:scaleX(0.606);transform-origin:0 0;">3,92</div>
<div class="t" style="top:911.24px;font-size:15.4px;color:#f0f0f0;left:1473.40px;transform:scaleX(0.606);transform-origin:0 0;">3,95</div>
<div class="t" style="top:911.24px;font-size:15.4px;color:#f0f0f0;left:1514.30px;transform:scaleX(0.606);transform-origin:0 0;">3,93</div>
<div class="t" style="top:911.24px;font-size:15.4px;color:#f0f0f0;left:1554.90px;transform:scaleX(0.606);transform-origin:0 0;">3,85</div>
<div class="t" style="top:911.24px;font-size:15.4px;color:#f0f0f0;left:1595.50px;transform:scaleX(0.606);transform-origin:0 0;">3,82</div>
<div class="t" style="top:911.24px;font-size:15.4px;color:#f0f0f0;left:1636.40px;transform:scaleX(0.606);transform-origin:0 0;">3,75</div>
<div class="t" style="top:911.24px;font-size:15.4px;color:#f0f0f0;left:1677.00px;transform:scaleX(0.606);transform-origin:0 0;">3,69</div>
<div class="t" style="top:911.24px;font-size:15.4px;color:#f0f0f0;left:1717.70px;transform:scaleX(0.606);transform-origin:0 0;">3,76</div>
<div class="t" style="top:911.24px;font-size:15.4px;color:#f0f0f0;left:1758.50px;transform:scaleX(0.606);transform-origin:0 0;">3,52</div>
<div class="a " style="left:201px;top:970px;width:64.5px;height:61px;background:linear-gradient(180deg,#a4a4a4 0,#8c8c8c 22%,#6e6e6e 70%,#5a5a5a 100%);border-radius:5px;border:1px solid rgba(170,170,170,.55);border-bottom-color:#4a4a4a;border-right-color:rgba(80,80,80,.6)"></div>
<div class="a " style="left:206px;top:975px;width:54.5px;height:35.8px;background:rgb(0,0,0);border-radius:4px;box-shadow:0 0 0 1px rgba(0,0,0,.18),inset 0 1px 2px rgba(0,0,0,.25)"></div>
<div class="t" style="top:1017.23px;font-size:11.3px;color:#2e2e2e;left:233.30px;transform:translateX(-50%);transform-origin:50% 0;">0</div>
<div class="a " style="left:267.4px;top:970px;width:64.5px;height:61px;background:linear-gradient(180deg,#a4a4a4 0,#8c8c8c 22%,#6e6e6e 70%,#5a5a5a 100%);border-radius:5px;border:1px solid rgba(170,170,170,.55);border-bottom-color:#4a4a4a;border-right-color:rgba(80,80,80,.6)"></div>
<div class="a " style="left:272.4px;top:975px;width:54.5px;height:35.8px;background:rgb(13,13,13);border-radius:4px;box-shadow:0 0 0 1px rgba(0,0,0,.18),inset 0 1px 2px rgba(0,0,0,.25)"></div>
<div class="t" style="top:1017.23px;font-size:11.3px;color:#2e2e2e;left:299.70px;transform:translateX(-50%);transform-origin:50% 0;">5</div>
<div class="a " style="left:333.8px;top:970px;width:64.5px;height:61px;background:linear-gradient(180deg,#a4a4a4 0,#8c8c8c 22%,#6e6e6e 70%,#5a5a5a 100%);border-radius:5px;border:1px solid rgba(170,170,170,.55);border-bottom-color:#4a4a4a;border-right-color:rgba(80,80,80,.6)"></div>
<div class="a " style="left:338.8px;top:975px;width:54.5px;height:35.8px;background:rgb(26,26,26);border-radius:4px;box-shadow:0 0 0 1px rgba(0,0,0,.18),inset 0 1px 2px rgba(0,0,0,.25)"></div>
<div class="t" style="top:1017.23px;font-size:11.3px;color:#2e2e2e;left:366.10px;transform:translateX(-50%);transform-origin:50% 0;">10</div>
<div class="a " style="left:400.2px;top:970px;width:64.5px;height:61px;background:linear-gradient(180deg,#a4a4a4 0,#8c8c8c 22%,#6e6e6e 70%,#5a5a5a 100%);border-radius:5px;border:1px solid rgba(170,170,170,.55);border-bottom-color:#4a4a4a;border-right-color:rgba(80,80,80,.6)"></div>
<div class="a " style="left:405.2px;top:975px;width:54.5px;height:35.8px;background:rgb(38,38,38);border-radius:4px;box-shadow:0 0 0 1px rgba(0,0,0,.18),inset 0 1px 2px rgba(0,0,0,.25)"></div>
<div class="t" style="top:1017.23px;font-size:11.3px;color:#2e2e2e;left:432.50px;transform:translateX(-50%);transform-origin:50% 0;">15</div>
<div class="a " style="left:466.6px;top:970px;width:64.5px;height:61px;background:linear-gradient(180deg,#a4a4a4 0,#8c8c8c 22%,#6e6e6e 70%,#5a5a5a 100%);border-radius:5px;border:1px solid rgba(170,170,170,.55);border-bottom-color:#4a4a4a;border-right-color:rgba(80,80,80,.6)"></div>
<div class="a " style="left:471.6px;top:975px;width:54.5px;height:35.8px;background:rgb(51,51,51);border-radius:4px;box-shadow:0 0 0 1px rgba(0,0,0,.18),inset 0 1px 2px rgba(0,0,0,.25)"></div>
<div class="t" style="top:1017.23px;font-size:11.3px;color:#2e2e2e;left:498.90px;transform:translateX(-50%);transform-origin:50% 0;">20</div>
<div class="a " style="left:533px;top:970px;width:64.5px;height:61px;background:linear-gradient(180deg,#a4a4a4 0,#8c8c8c 22%,#6e6e6e 70%,#5a5a5a 100%);border-radius:5px;border:1px solid rgba(170,170,170,.55);border-bottom-color:#4a4a4a;border-right-color:rgba(80,80,80,.6)"></div>
<div class="a " style="left:538px;top:975px;width:54.5px;height:35.8px;background:rgb(64,64,64);border-radius:4px;box-shadow:0 0 0 1px rgba(0,0,0,.18),inset 0 1px 2px rgba(0,0,0,.25)"></div>
<div class="t" style="top:1017.23px;font-size:11.3px;color:#2e2e2e;left:565.30px;transform:translateX(-50%);transform-origin:50% 0;">25</div>
<div class="a " style="left:599.4px;top:970px;width:64.5px;height:61px;background:linear-gradient(180deg,#a4a4a4 0,#8c8c8c 22%,#6e6e6e 70%,#5a5a5a 100%);border-radius:5px;border:1px solid rgba(170,170,170,.55);border-bottom-color:#4a4a4a;border-right-color:rgba(80,80,80,.6)"></div>
<div class="a " style="left:604.4px;top:975px;width:54.5px;height:35.8px;background:rgb(76,76,76);border-radius:4px;box-shadow:0 0 0 1px rgba(0,0,0,.18),inset 0 1px 2px rgba(0,0,0,.25)"></div>
<div class="t" style="top:1017.23px;font-size:11.3px;color:#2e2e2e;left:631.70px;transform:translateX(-50%);transform-origin:50% 0;">30</div>
<div class="a " style="left:665.8px;top:970px;width:64.5px;height:61px;background:linear-gradient(180deg,#a4a4a4 0,#8c8c8c 22%,#6e6e6e 70%,#5a5a5a 100%);border-radius:5px;border:1px solid rgba(170,170,170,.55);border-bottom-color:#4a4a4a;border-right-color:rgba(80,80,80,.6)"></div>
<div class="a " style="left:670.8px;top:975px;width:54.5px;height:35.8px;background:rgb(89,89,89);border-radius:4px;box-shadow:0 0 0 1px rgba(0,0,0,.18),inset 0 1px 2px rgba(0,0,0,.25)"></div>
<div class="t" style="top:1017.23px;font-size:11.3px;color:#2e2e2e;left:698.10px;transform:translateX(-50%);transform-origin:50% 0;">35</div>
<div class="a " style="left:732.2px;top:970px;width:64.5px;height:61px;background:linear-gradient(180deg,#a4a4a4 0,#8c8c8c 22%,#6e6e6e 70%,#5a5a5a 100%);border-radius:5px;border:1px solid rgba(170,170,170,.55);border-bottom-color:#4a4a4a;border-right-color:rgba(80,80,80,.6)"></div>
<div class="a " style="left:737.2px;top:975px;width:54.5px;height:35.8px;background:rgb(102,102,102);border-radius:4px;box-shadow:0 0 0 1px rgba(0,0,0,.18),inset 0 1px 2px rgba(0,0,0,.25)"></div>
<div class="t" style="top:1017.23px;font-size:11.3px;color:#2e2e2e;left:764.50px;transform:translateX(-50%);transform-origin:50% 0;">40</div>
<div class="a " style="left:798.6px;top:970px;width:64.5px;height:61px;background:linear-gradient(180deg,#a4a4a4 0,#8c8c8c 22%,#6e6e6e 70%,#5a5a5a 100%);border-radius:5px;border:1px solid rgba(170,170,170,.55);border-bottom-color:#4a4a4a;border-right-color:rgba(80,80,80,.6)"></div>
<div class="a " style="left:803.6px;top:975px;width:54.5px;height:35.8px;background:rgb(115,115,115);border-radius:4px;box-shadow:0 0 0 1px rgba(0,0,0,.18),inset 0 1px 2px rgba(0,0,0,.25)"></div>
<div class="t" style="top:1017.23px;font-size:11.3px;color:#2e2e2e;left:830.90px;transform:translateX(-50%);transform-origin:50% 0;">45</div>
<div class="a " style="left:865px;top:970px;width:64.5px;height:61px;background:linear-gradient(180deg,#a4a4a4 0,#8c8c8c 22%,#6e6e6e 70%,#5a5a5a 100%);border-radius:5px;border:1px solid rgba(170,170,170,.55);border-bottom-color:#4a4a4a;border-right-color:rgba(80,80,80,.6)"></div>
<div class="a " style="left:870px;top:975px;width:54.5px;height:35.8px;background:rgb(128,128,128);border-radius:4px;box-shadow:0 0 0 1px rgba(0,0,0,.18),inset 0 1px 2px rgba(0,0,0,.25)"></div>
<div class="t" style="top:1017.23px;font-size:11.3px;color:#2e2e2e;left:897.30px;transform:translateX(-50%);transform-origin:50% 0;">50</div>
<div class="a " style="left:931.4px;top:970px;width:64.5px;height:61px;background:linear-gradient(180deg,#a4a4a4 0,#8c8c8c 22%,#6e6e6e 70%,#5a5a5a 100%);border-radius:5px;border:1px solid rgba(170,170,170,.55);border-bottom-color:#4a4a4a;border-right-color:rgba(80,80,80,.6)"></div>
<div class="a " style="left:936.4px;top:975px;width:54.5px;height:35.8px;background:rgb(140,140,140);border-radius:4px;box-shadow:0 0 0 1px rgba(0,0,0,.18),inset 0 1px 2px rgba(0,0,0,.25)"></div>
<div class="t" style="top:1017.23px;font-size:11.3px;color:#2e2e2e;left:963.70px;transform:translateX(-50%);transform-origin:50% 0;">55</div>
<div class="a " style="left:997.8px;top:970px;width:64.5px;height:61px;background:linear-gradient(180deg,#a4a4a4 0,#8c8c8c 22%,#6e6e6e 70%,#5a5a5a 100%);border-radius:5px;border:1px solid rgba(170,170,170,.55);border-bottom-color:#4a4a4a;border-right-color:rgba(80,80,80,.6)"></div>
<div class="a " style="left:1002.8px;top:975px;width:54.5px;height:35.8px;background:rgb(153,153,153);border-radius:4px;box-shadow:0 0 0 1px rgba(0,0,0,.18),inset 0 1px 2px rgba(0,0,0,.25)"></div>
<div class="t" style="top:1017.23px;font-size:11.3px;color:#2e2e2e;left:1030.10px;transform:translateX(-50%);transform-origin:50% 0;">60</div>
<div class="a " style="left:1064.2px;top:970px;width:64.5px;height:61px;background:linear-gradient(180deg,#a4a4a4 0,#8c8c8c 22%,#6e6e6e 70%,#5a5a5a 100%);border-radius:5px;border:1px solid rgba(170,170,170,.55);border-bottom-color:#4a4a4a;border-right-color:rgba(80,80,80,.6)"></div>
<div class="a " style="left:1069.2px;top:975px;width:54.5px;height:35.8px;background:rgb(166,166,166);border-radius:4px;box-shadow:0 0 0 1px rgba(0,0,0,.18),inset 0 1px 2px rgba(0,0,0,.25)"></div>
<div class="t" style="top:1017.23px;font-size:11.3px;color:#2e2e2e;left:1096.50px;transform:translateX(-50%);transform-origin:50% 0;">65</div>
<div class="a " style="left:1130.6px;top:970px;width:64.5px;height:61px;background:linear-gradient(180deg,#a4a4a4 0,#8c8c8c 22%,#6e6e6e 70%,#5a5a5a 100%);border-radius:5px;border:1px solid rgba(170,170,170,.55);border-bottom-color:#4a4a4a;border-right-color:rgba(80,80,80,.6)"></div>
<div class="a " style="left:1135.6px;top:975px;width:54.5px;height:35.8px;background:rgb(178,178,178);border-radius:4px;box-shadow:0 0 0 1px rgba(0,0,0,.18),inset 0 1px 2px rgba(0,0,0,.25)"></div>
<div class="t" style="top:1017.23px;font-size:11.3px;color:#2e2e2e;left:1162.90px;transform:translateX(-50%);transform-origin:50% 0;">70</div>
<div class="a " style="left:1197px;top:970px;width:64.5px;height:61px;background:linear-gradient(180deg,#a4a4a4 0,#8c8c8c 22%,#6e6e6e 70%,#5a5a5a 100%);border-radius:5px;border:1px solid rgba(170,170,170,.55);border-bottom-color:#4a4a4a;border-right-color:rgba(80,80,80,.6)"></div>
<div class="a " style="left:1202px;top:975px;width:54.5px;height:35.8px;background:rgb(191,191,191);border-radius:4px;box-shadow:0 0 0 1px rgba(0,0,0,.18),inset 0 1px 2px rgba(0,0,0,.25)"></div>
<div class="t" style="top:1017.23px;font-size:11.3px;color:#2e2e2e;left:1229.30px;transform:translateX(-50%);transform-origin:50% 0;">75</div>
<div class="a " style="left:1263.4px;top:970px;width:64.5px;height:61px;background:linear-gradient(180deg,#a4a4a4 0,#8c8c8c 22%,#6e6e6e 70%,#5a5a5a 100%);border-radius:5px;border:1px solid rgba(170,170,170,.55);border-bottom-color:#4a4a4a;border-right-color:rgba(80,80,80,.6)"></div>
<div class="a " style="left:1268.4px;top:975px;width:54.5px;height:35.8px;background:rgb(204,204,204);border-radius:4px;box-shadow:0 0 0 1px rgba(0,0,0,.18),inset 0 1px 2px rgba(0,0,0,.25)"></div>
<div class="t" style="top:1017.23px;font-size:11.3px;color:#2e2e2e;left:1295.70px;transform:translateX(-50%);transform-origin:50% 0;">80</div>
<div class="a " style="left:1329.8px;top:970px;width:64.5px;height:61px;background:linear-gradient(180deg,#a4a4a4 0,#8c8c8c 22%,#6e6e6e 70%,#5a5a5a 100%);border-radius:5px;border:1px solid rgba(170,170,170,.55);border-bottom-color:#4a4a4a;border-right-color:rgba(80,80,80,.6)"></div>
<div class="a " style="left:1334.8px;top:975px;width:54.5px;height:35.8px;background:rgb(217,217,217);border-radius:4px;box-shadow:0 0 0 1px rgba(0,0,0,.18),inset 0 1px 2px rgba(0,0,0,.25)"></div>
<div class="t" style="top:1017.23px;font-size:11.3px;color:#2e2e2e;left:1362.10px;transform:translateX(-50%);transform-origin:50% 0;">85</div>
<div class="a " style="left:1396.2px;top:970px;width:64.5px;height:61px;background:linear-gradient(180deg,#a4a4a4 0,#8c8c8c 22%,#6e6e6e 70%,#5a5a5a 100%);border-radius:5px;border:1px solid rgba(170,170,170,.55);border-bottom-color:#4a4a4a;border-right-color:rgba(80,80,80,.6)"></div>
<div class="a " style="left:1401.2px;top:975px;width:54.5px;height:35.8px;background:rgb(230,230,230);border-radius:4px;box-shadow:0 0 0 1px rgba(0,0,0,.18),inset 0 1px 2px rgba(0,0,0,.25)"></div>
<div class="t" style="top:1017.23px;font-size:11.3px;color:#2e2e2e;left:1428.50px;transform:translateX(-50%);transform-origin:50% 0;">90</div>
<div class="a " style="left:1462.6px;top:970px;width:64.5px;height:61px;background:linear-gradient(180deg,#a4a4a4 0,#8c8c8c 22%,#6e6e6e 70%,#5a5a5a 100%);border-radius:5px;border:1px solid rgba(170,170,170,.55);border-bottom-color:#4a4a4a;border-right-color:rgba(80,80,80,.6)"></div>
<div class="a " style="left:1467.6px;top:975px;width:54.5px;height:35.8px;background:rgb(242,242,242);border-radius:4px;box-shadow:0 0 0 1px rgba(0,0,0,.18),inset 0 1px 2px rgba(0,0,0,.25)"></div>
<div class="t" style="top:1017.23px;font-size:11.3px;color:#2e2e2e;left:1494.90px;transform:translateX(-50%);transform-origin:50% 0;">95</div>
<div class="a " style="left:1529px;top:970px;width:65px;height:61px;background:linear-gradient(180deg,#1a1a1a,#3a3a3a);border-radius:5px;border:1px solid #2a2a2a"></div>
<div class="a " style="left:1534px;top:975px;width:54.5px;height:35.8px;background:rgb(255,255,255);border-radius:4px;box-shadow:0 0 0 1px rgba(0,0,0,.18),inset 0 1px 2px rgba(0,0,0,.25)"></div>
<div class="t" style="top:1017.23px;font-size:11.3px;color:#fff;font-weight:bold;left:1561.30px;transform:translateX(-50%);transform-origin:50% 0;">100</div>
<div class="a " style="left:1597px;top:970px;width:48px;height:18.5px;background:linear-gradient(180deg,#a2a2a2 0,#8a8a8a 55%,#747474 100%);border:1px solid #b0b0b0;border-right-color:#555;border-bottom-color:#555;border-radius:4px 4px 0 0"></div>
<div class="a " style="left:1614px;top:972.5px;width:15px;height:13px;border-radius:50%;background:radial-gradient(circle at 50% 25%,#6c6c6c,#858585 70%,#9a9a9a)"></div>
<svg style="left:1617.500px;top:975.500px" width="8" height="5" viewBox="0 0 8 5"><path d="M0 5h8l-4-5z" fill="#2a2a2a"/></svg>
<div class="a " style="left:1597px;top:989px;width:48px;height:42px;background:linear-gradient(180deg,#a2a2a2 0,#8a8a8a 55%,#747474 100%);border:1px solid #b0b0b0;border-right-color:#555;border-bottom-color:#555;border-radius:0 0 4px 4px"></div>
<div class="a " style="left:1606px;top:995px;width:30px;height:30px;border:2px solid #2c2c2c;border-radius:4px;background:linear-gradient(180deg,#8a8a8a 0,#8a8a8a 50%,#767676 51%,#7a7a7a 100%)"></div>
<div class="a " style="left:1614px;top:1003px;width:14px;height:14px;background:#000"></div>
<div class="a " style="left:1646px;top:970px;width:46px;height:30px;background:linear-gradient(180deg,#a2a2a2 0,#8a8a8a 55%,#747474 100%);border:1px solid #b0b0b0;border-right-color:#555;border-bottom-color:#555;"></div>
<div class="a " style="left:1659px;top:975.5px;width:19px;height:19px;border-radius:50%;background:radial-gradient(circle at 50% 25%,#6c6c6c,#858585 70%,#9a9a9a)"></div>
<div class="a " style="left:1692px;top:970px;width:45.5px;height:30px;background:linear-gradient(180deg,#a2a2a2 0,#8a8a8a 55%,#747474 100%);border:1px solid #b0b0b0;border-right-color:#555;border-bottom-color:#555;"></div>
<div class="a " style="left:1704.75px;top:975.5px;width:19px;height:19px;border-radius:50%;background:radial-gradient(circle at 50% 25%,#6c6c6c,#858585 70%,#9a9a9a)"></div>
<div class="a " style="left:1737.5px;top:970px;width:45.5px;height:30px;background:linear-gradient(180deg,#a2a2a2 0,#8a8a8a 55%,#747474 100%);border:1px solid #b0b0b0;border-right-color:#555;border-bottom-color:#555;"></div>
<div class="a " style="left:1750.25px;top:975.5px;width:19px;height:19px;border-radius:50%;background:radial-gradient(circle at 50% 25%,#6c6c6c,#858585 70%,#9a9a9a)"></div>
<div class="a " style="left:1783px;top:970px;width:44.5px;height:30px;background:linear-gradient(180deg,#a2a2a2 0,#8a8a8a 55%,#747474 100%);border:1px solid #b0b0b0;border-right-color:#555;border-bottom-color:#555;"></div>
<div class="a " style="left:1795.25px;top:975.5px;width:19px;height:19px;border-radius:50%;background:radial-gradient(circle at 50% 25%,#6c6c6c,#858585 70%,#9a9a9a)"></div>
<div class="a " style="left:1827.5px;top:970px;width:44.5px;height:30px;background:linear-gradient(180deg,#a2a2a2 0,#8a8a8a 55%,#747474 100%);border:1px solid #b0b0b0;border-right-color:#555;border-bottom-color:#555;"></div>
<div class="a " style="left:1839.75px;top:975.5px;width:19px;height:19px;border-radius:50%;background:radial-gradient(circle at 50% 25%,#6c6c6c,#858585 70%,#9a9a9a)"></div>
<div class="a " style="left:1872px;top:970px;width:48px;height:30px;background:linear-gradient(180deg,#2a2a2a,#3c3c3c)"></div>
<div class="a " style="left:1885.5px;top:975.5px;width:19px;height:19px;border-radius:50%;background:linear-gradient(180deg,#2c2c2c,#3a3a3a 60%,#464646)"></div>
<svg style="left:1646px;top:970px" width="226" height="30" viewBox="0 0 226 30"><rect x="18.500" y="11" width="8" height="8" fill="#2a2a2a"/><path d="M65 10v10l9-5z" fill="#2a2a2a"/><path d="M110.500 10.500h-2v9h2M117.500 10.500h2v9h-2" fill="none" stroke="#2a2a2a" stroke-width="1.600"/><path d="M111.500 15h1.500M115 15h1.500" stroke="#2a2a2a" stroke-width="1.600"/><path d="M159 15c-1.500-2.600-5-2.600-5 0s3.500 2.600 5 0c1.500-2.600 5-2.600 5 0s-3.500 2.600-5 0z" fill="none" stroke="#2a2a2a" stroke-width="1.500"/><g fill="none" stroke="#2a2a2a" stroke-width="1.800"><path d="M198.500 14a5.200 5.200 0 0 1 9-2.500"/><path d="M209.500 16a5.200 5.200 0 0 1-9 2.500"/></g><path d="M208.500 8.500v4h-4zM199.500 21.500v-4h4z" fill="#2a2a2a"/></svg>
<div class="a " style="left:1646px;top:1001px;width:137px;height:30px;background:linear-gradient(180deg,#a2a2a2 0,#8a8a8a 55%,#747474 100%);border:1px solid #b0b0b0;border-right-color:#555;border-bottom-color:#555;border-radius:0 0 0 4px"></div>
<div class="a " style="left:1783px;top:1001px;width:136px;height:30px;background:linear-gradient(180deg,#a2a2a2 0,#8a8a8a 55%,#747474 100%);border:1px solid #b0b0b0;border-right-color:#555;border-bottom-color:#555;border-radius:0 0 4px 0"></div>
<div class="a " style="left:1667px;top:1006.5px;width:19px;height:19px;border-radius:50%;background:radial-gradient(circle at 50% 25%,#6c6c6c,#858585 70%,#9a9a9a)"></div>
<div class="a " style="left:1879px;top:1006.5px;width:19px;height:19px;border-radius:50%;background:radial-gradient(circle at 50% 25%,#6c6c6c,#858585 70%,#9a9a9a)"></div>
<div class="t" style="top:1005.92px;font-size:19px;color:#2a2a2a;left:1676.50px;transform:translateX(-50%);transform-origin:50% 0;">«</div>
<div class="t" style="top:1005.92px;font-size:19px;color:#2a2a2a;left:1888.50px;transform:translateX(-50%);transform-origin:50% 0;">»</div>
<div class="t" style="top:1005.65px;font-size:20.5px;color:#3a3a3a;font-weight:bold;left:1703.00px;transform:scaleX(1.04064);transform-origin:0 0;">Back</div>
<div class="t" style="top:1005.65px;font-size:20.5px;color:#3a3a3a;font-weight:bold;left:1810.60px;transform:scaleX(1.14778);transform-origin:0 0;">Next</div>
<div class="a " style="left:0px;top:1032px;width:1920px;height:48px;background:linear-gradient(90deg,#2f2414 0,#2d2815 25%,#2b2c16 50%,#292a18 75%,#27251a 100%)"></div>
<div class="a " style="left:0px;top:1032px;width:1920px;height:1px;background:rgba(255,255,255,.06)"></div>
<div class="a " style="left:918px;top:1035px;width:41px;height:41px;background:rgba(255,255,255,.07);border-radius:4px;border:1px solid rgba(255,255,255,.06)"></div>
<div class="a " style="left:931.5px;top:1072.5px;width:14px;height:3px;background:#4cc2ff;border-radius:2px"></div>
<div class="a " style="left:759px;top:1073px;width:6px;height:2.5px;background:#9a9a9a;border-radius:2px"></div>
<svg style="left:0;top:0" width="1920" height="1080" viewBox="0 0 1920 1080"><g fill="#35b6f5"><rect x="707" y="1045" width="10.500" height="10.500" rx=".8"/><rect x="718.800" y="1045" width="10.500" height="10.500" rx=".8"/><rect x="707" y="1056.800" width="10.500" height="10.500" rx=".8"/><rect x="718.800" y="1056.800" width="10.500" height="10.500" rx=".8"/></g><path d="M751 1047.500a1.500 1.500 0 0 1 1.500-1.500h6l2.500 2.500h11.500a1.500 1.500 0 0 1 1.500 1.500v14a1.500 1.500 0 0 1-1.500 1.500h-20a1.500 1.500 0 0 1-1.500-1.500z" fill="#f5b93a"/><path d="M751 1051h23v13a1.500 1.500 0 0 1-1.500 1.500h-20a1.500 1.500 0 0 1-1.500-1.500z" fill="#fcd663"/><rect x="755.500" y="1058" width="14" height="8" rx="1.500" fill="#1f7fd6"/><rect x="759" y="1061" width="7" height="1.600" fill="#9ad0ff"/><circle cx="807" cy="1056" r="12" fill="#5865f2"/><path d="M800 1052c4-2.500 10-2.500 14 0 1.500 3 2 6 1.800 8.500-1.800 1.300-3.500 1.800-4.500 2l-1-1.800c-2 .6-4.600.6-6.600 0l-1 1.800c-1-.200-2.700-.700-4.500-2-.2-2.500.300-5.500 1.800-8.500z" fill="#fff"/><ellipse cx="804.300" cy="1057.300" rx="1.700" ry="2" fill="#5865f2"/><ellipse cx="809.700" cy="1057.300" rx="1.700" ry="2" fill="#5865f2"/><rect x="839" y="1044" width="24" height="24" rx="4" fill="#4cb648"/><path d="M846 1048h7l4 4v12h-11z" fill="#e9f7e6"/><rect x="844.500" y="1055" width="13" height="5.500" fill="#3a9a3a"/><rect x="882.500" y="1044" width="23.500" height="24" fill="#b8d4e0"/><path d="M901 1050.500a8 8 0 1 0 0 11.500" fill="none" stroke="#e01010" stroke-width="3.600"/><path d="M896.500 1055.500h9l-4.500 5z" fill="#e01010"/><rect x="882.500" y="1044" width="23.500" height="24" fill="none" stroke="#d8e8f0" stroke-width="1"/><g transform="translate(938.500 1054.500) rotate(45)"><rect x="-8.300" y="-8.300" width="7.900" height="7.900" rx="1.600" fill="#ffc61a"/><rect x="0.400" y="-8.300" width="7.900" height="7.900" rx="1.600" fill="#35c935"/><rect x="-8.300" y="0.400" width="7.900" height="7.900" rx="1.600" fill="#29a9e8"/><rect x="0.400" y="0.400" width="7.900" height="7.900" rx="1.600" fill="#e8286a"/><rect x="-3.500" y="-3.500" width="7" height="7" rx="1" fill="#222" opacity=".75"/></g><rect x="972" y="1045" width="22" height="22" fill="#c8c8c8" stroke="#7a1010" stroke-width="1.500"/><path d="M974 1056c4-6 14-6 18 0-4 5-14 5-18 0z" fill="#f4f4f4" stroke="#222" stroke-width="1.200"/><circle cx="983" cy="1056" r="3.600" fill="#222"/><path d="M974 1051c4-4 14-4 18-1" fill="none" stroke="#333" stroke-width="1.600"/><path d="M1015 1057c5-7 18-7 23 0-5 6-18 6-23 0z" fill="#2a1c08" stroke="#f5a818" stroke-width="2"/><circle cx="1026.500" cy="1057" r="3.800" fill="none" stroke="#e03010" stroke-width="1.600"/><circle cx="1018" cy="1048.500" r="2" fill="#f5a818"/><circle cx="1026.500" cy="1046.500" r="2" fill="#f5a818"/><circle cx="1035" cy="1048.500" r="2" fill="#f5a818"/><path d="M1071 1044c-7 0-12 5-12 11.500 0 6 4.500 10.500 9 10.500 3 0 3.500-2.500 2.500-4.500-1-2.200 0-4 2.500-4h4c3.500 0 6-2 6-5 0-5-5-8.500-12-8.500z" fill="#2fa3e0"/><circle cx="1064.500" cy="1055" r="1.900" fill="#e8d020"/><circle cx="1067.500" cy="1049.500" r="1.900" fill="#e84040"/><circle cx="1073.500" cy="1048" r="1.900" fill="#40c040"/><path d="M1078 1046l3 1-3.500 16-2.500-.700z" fill="#c88a3a"/><path d="M1074.500 1062l3 .8-.500 4.500-3-.800z" fill="#8a5a2a"/><path d="M1104 1045h18l3 3v20h-21z" fill="#2e6e9e"/><path d="M1106 1049c5-3 10 1 17-2M1106 1053c5-3 10 1 17-2" stroke="#cfe4f2" stroke-width="1.500" fill="none"/><rect x="1108" y="1057" width="13" height="1.600" fill="#cfe4f2"/><rect x="1108" y="1060.500" width="13" height="1.600" fill="#cfe4f2"/><rect x="1108" y="1064" width="9" height="1.600" fill="#cfe4f2"/><rect x="1149" y="1044.500" width="20" height="23" rx="1.500" fill="#e8eef6" stroke="#7aa0c8" stroke-width="1"/><rect x="1149" y="1044.500" width="20" height="3.500" fill="#6a98cc"/><rect x="1149" y="1064" width="20" height="3.500" fill="#9ab8dc"/><circle cx="1203" cy="1057" r="11.500" fill="#ff9a1a"/><path d="M1203 1044c3 2 8 4 10 9 2.500 6 0 12-5 14.500 3-5 1-10-3-12 0-4-1-8-2-11.500z" fill="#ffcf30"/><circle cx="1202" cy="1058" r="6.500" fill="#8a3ad8"/><path d="M1192 1051c2-1 6-1 8 2-3 0-4.500 2-4 5-3 0-5-3-4-7z" fill="#ff5a2a"/><path d="M1192.500 1062a11.500 11.500 0 0 0 21 0c-5 5-15 6-21 0z" fill="#ff3a4a"/><g fill="none" stroke="#fff" stroke-width="1.200"><rect x="1668.500" y="1050.500" width="6" height="11" rx="1.200"/><path d="M1670 1050.500v-2.500h3v2.500M1675 1062.500l1.500 1.500"/></g><path d="M1713.500 1050l7.500-2.500 7.500 2.500v6c0 5-3.500 8-7.500 9.500-4-1.500-7.500-4.500-7.500-9.500z" fill="#2a8ae0"/><path d="M1721 1047.500l7.500 2.500v6c0 5-3.500 8-7.500 9.500z" fill="#1a6ac0"/><path d="M1726 1057l5 8.500h-10z" fill="#f8c820" stroke="#333" stroke-width=".6"/><g fill="none" stroke="#fff" stroke-width="1.300" stroke-linecap="round"><path d="M1740.500 1053.500a12 12 0 0 1 17 0"/><path d="M1743 1056.500a8.300 8.300 0 0 1 12 0"/><path d="M1745.800 1059.300a4.500 4.500 0 0 1 6.400 0"/></g><circle cx="1749" cy="1062" r="1.300" fill="#fff"/><path d="M1766 1054h2.500l3.500-3v12l-3.500-3h-2.500z" fill="none" stroke="#fff" stroke-width="1.200" stroke-linejoin="round"/><path d="M1774.500 1053.500a5 5 0 0 1 0 7M1776.800 1051.500a8 8 0 0 1 0 11" fill="none" stroke="#fff" stroke-width="1.100" stroke-linecap="round"/><rect x="1790" y="1051.500" width="13.500" height="9" rx="2" fill="none" stroke="#fff" stroke-width="1.200"/><rect x="1792" y="1053.500" width="6.500" height="5" rx=".8" fill="#fff"/><path d="M1804.800 1054.500v3" stroke="#fff" stroke-width="1.400" stroke-linecap="round"/><path d="M1895.400 1049.600A7.200 7.200 0 1 1 1886.300 1060.100A9 9 0 0 0 1895.400 1049.600Z" fill="none" stroke="#fff" stroke-width="1.200" stroke-linejoin="round"/></svg>
<div class="t" style="top:1050.14px;font-size:12px;color:#fff;font-weight:bold;left:1697.50px;transform:translateX(-50%);transform-origin:50% 0;">37</div>
<div class="t" style="top:1042.57px;font-size:11.5px;color:#fff;right:44.00px;">12:39</div>
<div class="t" style="top:1059.57px;font-size:11.5px;color:#fff;right:44.00px;">05.01.2022</div>
</body></html>
